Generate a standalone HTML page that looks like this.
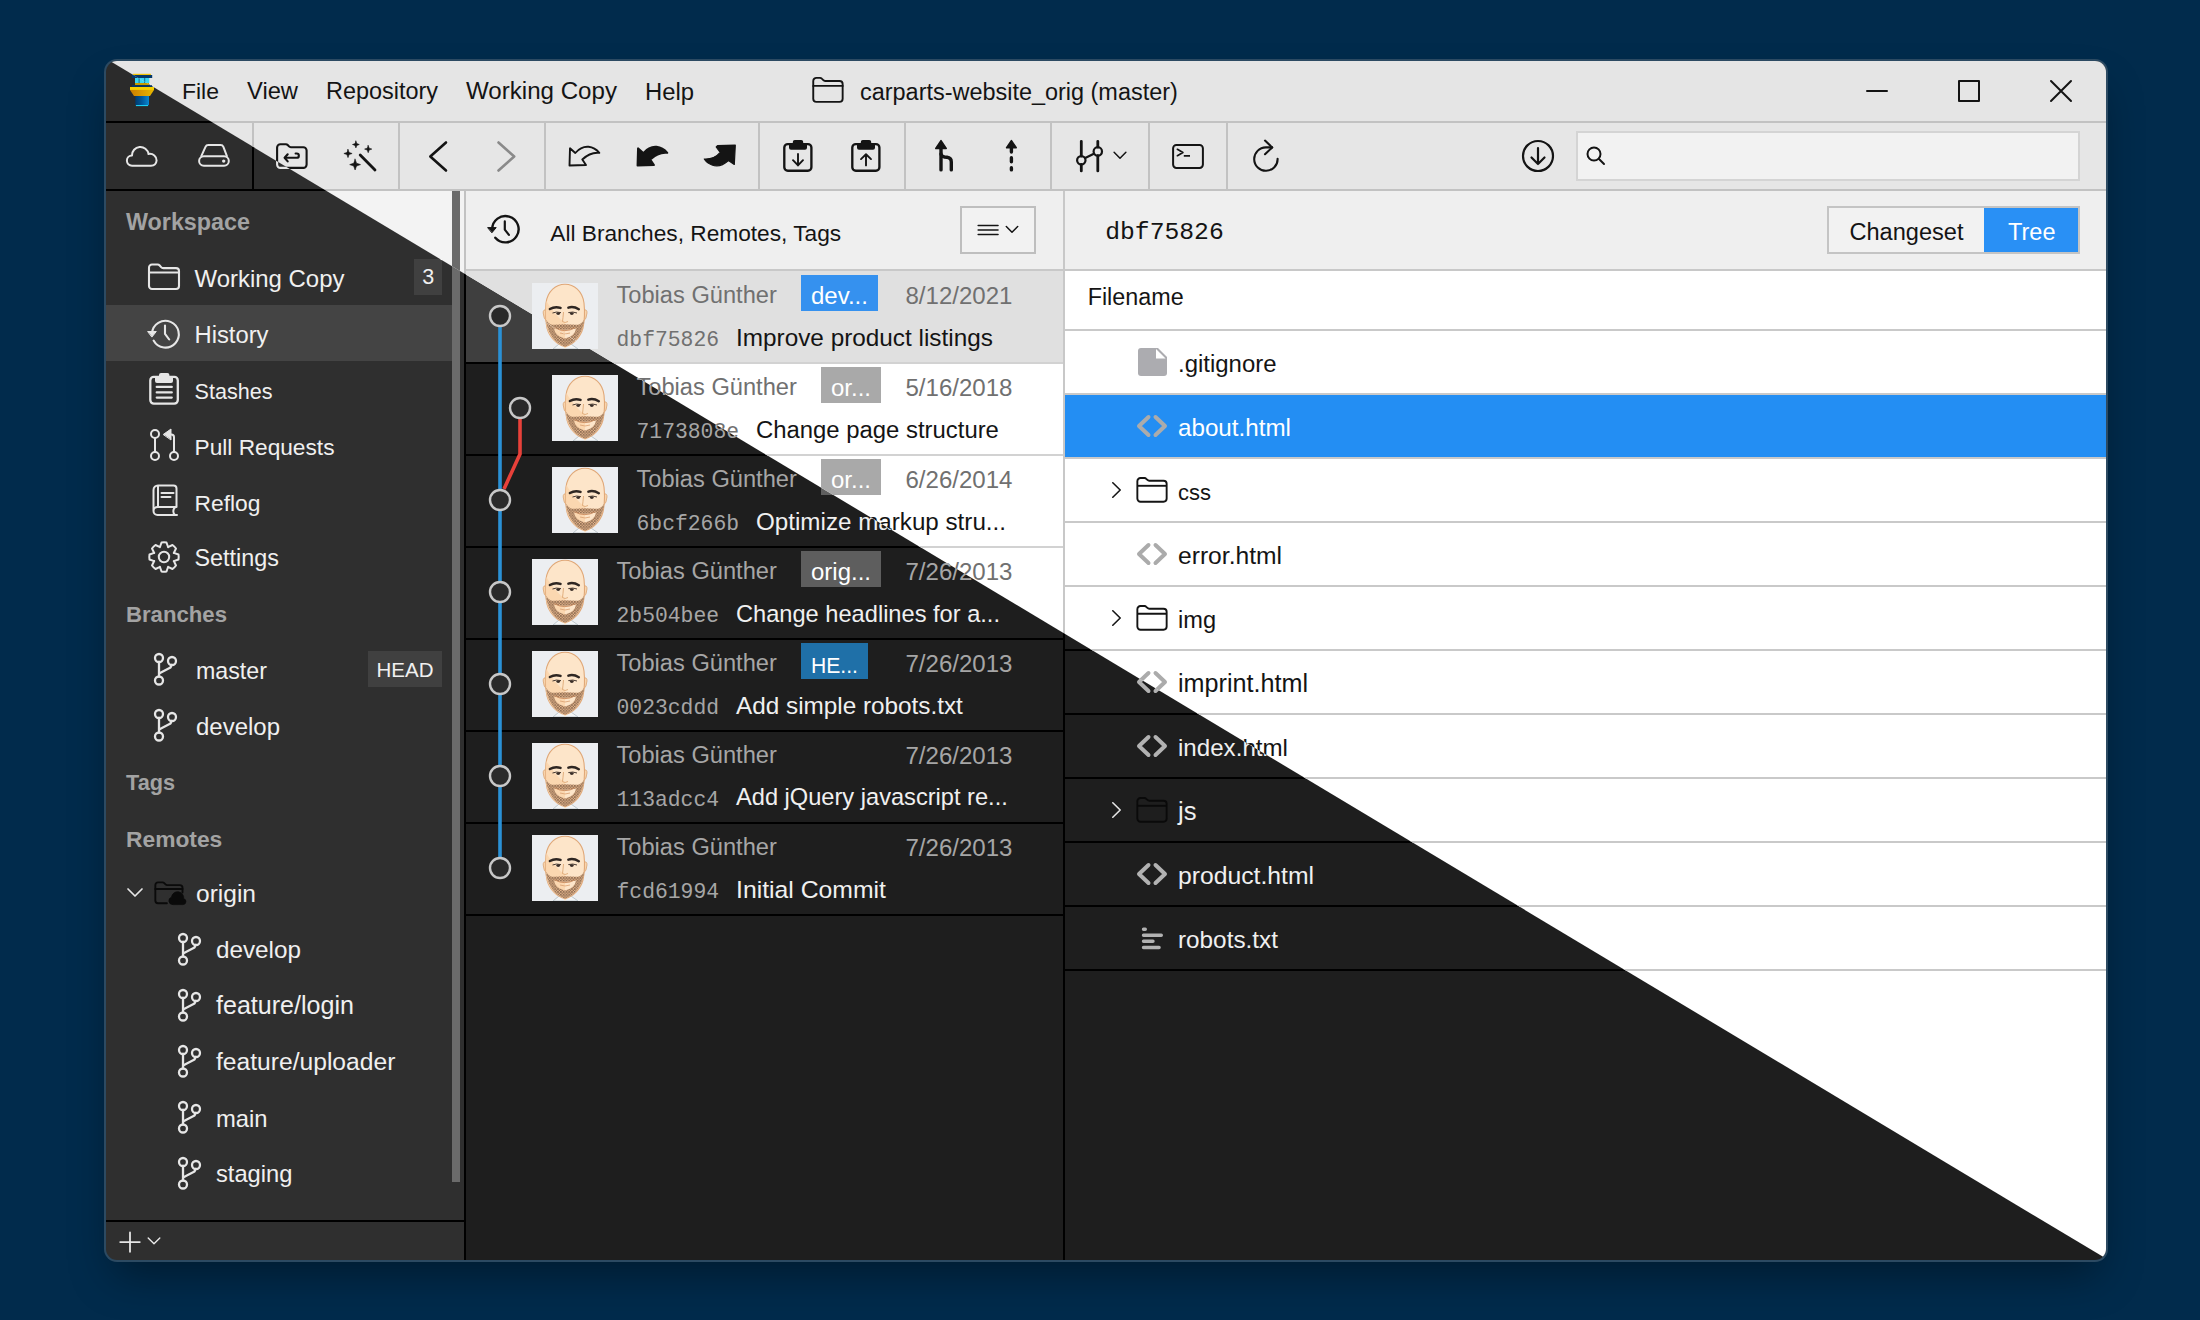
<!DOCTYPE html>
<html><head><meta charset="utf-8"><title>Tower</title><style>
html,body{margin:0;padding:0}
body{width:2200px;height:1320px;background:#012b4c;position:relative;overflow:hidden;font-family:"Liberation Sans",sans-serif}
.frame{position:absolute;left:104px;top:59px;width:2004px;height:1203px;border-radius:13px;background:#2c4a62;box-shadow:0 22px 44px -10px rgba(0,0,0,0.40)}
.win{position:absolute;left:106px;top:61px;width:2000px;height:1199px;border-radius:11px;overflow:hidden}
.layer{position:absolute;left:-106px;top:-61px;width:2200px;height:1320px}
.light{clip-path:polygon(90px 49px, 2122px 1268.2px, 2200px 1268.2px, 2200px 0px, 90px 0px)}
.b{position:absolute}
.ic{position:absolute;overflow:visible}
.t{position:absolute;white-space:pre;line-height:1}
/* light */
.light .titlebar{background:#e5e5e5}
.light .toolbar{background:#e6e6e6}
.light .sep{background:#c2c2c2}
.light .sep2{background:#c8c8c8}
.light .sidebar{background:#f3f3f3}
.light .scroll{background:#6b6b6b}
.light .sel-side{background:#dedede}
.light .badge-side{background:#ffffff}
.light .hhead{background:#efefef}
.light .fhead{background:#ffffff}
.light .list{background:#ffffff}
.light .sel-hist{background:#e0e0e0}
.light .rowsep{background:#d2d2d2}
.light .rowsep2{background:#c9c9c9}
.light .sel-file{background:#238ef3}
.light .search{background:#f2f2f2;box-shadow:inset 0 0 0 2px #d4d4d4}
.light .mbtn{background:#f2f2f2;box-shadow:inset 0 0 0 2px #bebebe}
.light .seg{background:#f2f2f2;box-shadow:inset 0 0 0 2px #c4c4c4}
.light .seg-on{background:#2990f5}
.light .bdg-blue{background:#3591ef}
.light .bdg-blue2{background:#3591ef}
.light .bdg-grey{background:#a9a9a9}
.light .c-main{color:#141414}
.light .c-hdr{color:#8a8a8a}
.light .c-sub{color:#707070}
.light .c-white{color:#ffffff}
.light .c-ico{color:#141414}
.light .c-dim{color:#8a8a8a}
.light .c-fold{color:#141414}
.light .c-fileic{color:#acacb0}
.light .foldtri{fill:#ffffff}
.light .c-codeic{color:#ababab}
.light .gcirc{stroke:#6a6a6a;fill:#ffffff}
/* dark */
.dark .titlebar{background:#2b2b2b}
.dark .toolbar{background:#2d2d2d}
.dark .sep{background:#000000}
.dark .sep2{background:#000000}
.dark .sidebar{background:#2f2f2f}
.dark .scroll{background:#6b6b6b}
.dark .sel-side{background:#444444}
.dark .badge-side{background:#404040}
.dark .hhead{background:#2a2a2a}
.dark .fhead{background:#1e1e1e}
.dark .list{background:#1e1e1e}
.dark .sel-hist{background:#3f3f3f}
.dark .rowsep{background:#000000}
.dark .rowsep2{background:#000000}
.dark .sel-file{background:#1d6fb0}
.dark .search{background:#3a3a3a;box-shadow:inset 0 0 0 2px #555}
.dark .mbtn{box-shadow:inset 0 0 0 2px #555}
.dark .seg{background:#3a3a3a;box-shadow:inset 0 0 0 2px #555}
.dark .seg-on{background:#1d6fb0}
.dark .bdg-blue{background:#1f70a8}
.dark .bdg-blue2{background:#1f70a8}
.dark .bdg-grey{background:#5e5e5e}
.dark .c-main{color:#f0f0f0}
.dark .c-hdr{color:#a3a3a3}
.dark .c-sub{color:#a6a6a6}
.dark .c-white{color:#ffffff}
.dark .c-ico{color:#e6e6e6}
.dark .c-dim{color:#8a8a8a}
.dark .c-fold{color:#0a0a0a}
.dark .c-fileic{color:#9a9a9e}
.dark .foldtri{fill:#1e1e1e}
.dark .c-codeic{color:#b2b2b2}
.dark .gcirc{stroke:#c8c8c8;fill:#2a2a2a}
</style></head>
<body>
<svg width="0" height="0" style="position:absolute"><defs>
<pattern id="stub" width="2.8" height="2.8" patternUnits="userSpaceOnUse"><rect width="2.8" height="2.8" fill="#e9b78c"/><rect x="0.2" y="0.3" width="1.3" height="1.2" fill="#3f2f25"/><rect x="1.6" y="1.6" width="1.1" height="1.1" fill="#6e5442"/></pattern>
<clipPath id="headclip"><path d="M33 1.2C24 1.2 15.5 8 14 20C13.3 27 13.5 38 15 45C17.5 54 25 62 33 63.4C41 62 48.5 54 51 45C52.5 38 52.7 27 52 20C50.5 8 42 1.2 33 1.2Z"/></clipPath>
<symbol id="avatar" viewBox="0 0 66 66">
<rect width="66" height="66" fill="#eceef1"/>
<path d="M21 66 L27 61 L39 61 L46 66Z" fill="#f3f5f6" stroke="#a9b6bd" stroke-width="0.7"/>
<path d="M30 61 L33 66 L37 61Z" fill="#fbe3c6"/>
<path d="M14.6 27 Q11 26 11.2 30 Q11.5 36 15 38.5Z" fill="#f9d5ad" stroke="#dba574" stroke-width="0.8"/>
<path d="M51.6 27 Q55.2 26 55 30 Q54.7 36 51.2 38.5Z" fill="#f9d5ad" stroke="#dba574" stroke-width="0.8"/>
<path d="M33 1.2C24 1.2 15.5 8 14 20C13.3 27 13.5 38 15 45C17.5 54 25 62 33 63.4C41 62 48.5 54 51 45C52.5 38 52.7 27 52 20C50.5 8 42 1.2 33 1.2Z" fill="#fde5c9" stroke="#e0a878" stroke-width="1.1"/>
<g clip-path="url(#headclip)"><path d="M10 10 Q20 30 33 40 L33 66 L10 66Z" fill="#fad3aa" opacity="0.8"/></g>
<path fill-rule="evenodd" d="M14.3 37 Q17 41.5 21 41.8 Q33 40.5 45 41.8 Q49 41.5 52 37 C51.5 48 43 61 33 63.4 C23 61 14.5 48 14.3 37 Z M22 45.5 Q33 48 44 45.5 Q43 53 33 55.5 Q23 53 22 45.5 Z" fill="url(#stub)"/>
<path d="M22.5 44.8 Q33 50.5 43 44.8" stroke="#c98a5c" stroke-width="0.9" fill="none"/>
<path d="M28 50 Q33 52 38 50" stroke="#d9a070" stroke-width="0.8" fill="none"/>
<path d="M17.9 26 Q23 23 28.5 24.9" stroke="#2e2622" stroke-width="2.5" fill="none" stroke-linecap="round"/>
<path d="M36.4 24.6 Q41.5 23 46.8 26.2" stroke="#2e2622" stroke-width="2.5" fill="none" stroke-linecap="round"/>
<path d="M20.5 30 Q24 28.3 29 29.6" stroke="#4a3c34" stroke-width="1" fill="none"/>
<path d="M36.3 29.6 Q41 28.3 45 30" stroke="#4a3c34" stroke-width="1" fill="none"/>
<ellipse cx="26.2" cy="30.6" rx="1.9" ry="1.3" fill="#3a2e28"/>
<ellipse cx="39.8" cy="30.6" rx="1.9" ry="1.3" fill="#3a2e28"/>
<path d="M31.5 29 Q31 35 30.5 38.5 Q33 40.5 36 38.5" stroke="#d9a06a" stroke-width="0.8" fill="none"/>
</symbol></defs></svg>
<div class="frame"></div>
<div class="win">
<div class="layer dark">
<div class="b titlebar" style="left:106px;top:61px;width:2000px;height:60px;"></div>
<div class="b sep" style="left:106px;top:121px;width:2000px;height:2px;"></div>
<svg class="ic" style="left:129px;top:72px" width="27" height="36" viewBox="0 0 27 36">
<defs><linearGradient id="gcol" x1="0" x2="1"><stop offset="0" stop-color="#003a6e"/><stop offset="0.5" stop-color="#005a9e"/><stop offset="1" stop-color="#0a86d0"/></linearGradient>
<linearGradient id="gyel" x1="0" x2="1"><stop offset="0" stop-color="#c97d00"/><stop offset="0.5" stop-color="#db9a00"/><stop offset="1" stop-color="#e8b800"/></linearGradient></defs>
<rect x="4" y="1.8" width="18" height="1.2" fill="#f2c200"/>
<rect x="2.8" y="3" width="20.4" height="3" fill="#05386a"/>
<rect x="6" y="6" width="14.3" height="5" fill="#38d6f5"/>
<rect x="9.6" y="6" width="1" height="5" fill="#1a6a8a"/><rect x="15.2" y="6" width="1" height="5" fill="#1a6a8a"/>
<rect x="6" y="11" width="14" height="2" fill="#c49a00"/>
<rect x="3" y="13.1" width="20" height="1.8" fill="#05386a"/>
<polygon points="1,15 25,15 25,17.9 21,24 5,24 1,17.9" fill="url(#gyel)"/>
<rect x="1" y="15" width="24" height="2.9" fill="#f5cf00"/>
<rect x="6.3" y="24" width="13.7" height="9" fill="url(#gcol)"/>
<rect x="6.9" y="33" width="12.2" height="1.1" fill="#1ad0f5"/>
</svg>
<svg class="ic c-ico" style="left:812px;top:76px" width="34" height="28" viewBox="0 0 34 28" fill="none" stroke="currentColor" stroke-width="1.9" stroke-linecap="round" stroke-linejoin="round" ><path d="M1.25 5a3.15 3.15 0 0 1 3.15-3.15H8a2.5 2.5 0 0 1 1.8.8l1.5 1.5a2.5 2.5 0 0 0 1.8.8H27.5a3.15 3.15 0 0 1 3.15 3.15V22.7a3.15 3.15 0 0 1-3.15 3.15H4.4a3.15 3.15 0 0 1-3.15-3.15Z"/><path d="M1.25 9.9H30.65"/></svg>
<svg class="ic c-ico" style="left:1860px;top:80px" width="34" height="22" viewBox="0 0 34 22" fill="none" stroke="currentColor" stroke-width="2" stroke-linecap="round" stroke-linejoin="round" stroke-linecap="butt"><path d="M7 11h20"/></svg>
<svg class="ic c-ico" style="left:1955px;top:77px" width="28" height="28" viewBox="0 0 28 28" fill="none" stroke="currentColor" stroke-width="2" stroke-linecap="round" stroke-linejoin="round" stroke-linecap="butt" stroke-linejoin="miter"><rect x="4" y="4" width="20" height="20"/></svg>
<svg class="ic c-ico" style="left:2047px;top:77px" width="28" height="28" viewBox="0 0 28 28" fill="none" stroke="currentColor" stroke-width="2" stroke-linecap="round" stroke-linejoin="round" stroke-linecap="butt"><path d="M4 4L24 24M24 4L4 24"/></svg>
<div class="b toolbar" style="left:106px;top:123px;width:2000px;height:66px;"></div>
<div class="b sep" style="left:106px;top:189px;width:2000px;height:2px;"></div>
<div class="b sep" style="left:252px;top:123px;width:2px;height:66px;"></div>
<div class="b sep" style="left:398px;top:123px;width:2px;height:66px;"></div>
<div class="b sep" style="left:544px;top:123px;width:2px;height:66px;"></div>
<div class="b sep" style="left:758px;top:123px;width:2px;height:66px;"></div>
<div class="b sep" style="left:904px;top:123px;width:2px;height:66px;"></div>
<div class="b sep" style="left:1050px;top:123px;width:2px;height:66px;"></div>
<div class="b sep" style="left:1148px;top:123px;width:2px;height:66px;"></div>
<div class="b sep" style="left:1226px;top:123px;width:2px;height:66px;"></div>
<svg class="ic c-ico" style="left:122px;top:140px" width="40" height="32" viewBox="0 0 40 32" fill="none" stroke="currentColor" stroke-width="2" stroke-linecap="round" stroke-linejoin="round" ><path d="M10 25.7A5.1 5.1 0 0 1 10 15.5A8.3 8.3 0 0 1 26.5 14C31 13.2 34.9 16.5 34.6 20.5C34.3 23.7 32 25.7 29 25.7Z"/></svg>
<svg class="ic c-ico" style="left:196px;top:140px" width="36" height="32" viewBox="0 0 36 32" fill="none" stroke="currentColor" stroke-width="2" stroke-linecap="round" stroke-linejoin="round" ><rect x="3.1" y="16.2" width="29.7" height="9.5" rx="4.75"/><path d="M5.3 16.2L9.5 6.8Q10.3 5 12.3 5H24.6Q26.6 5 27.4 6.8L30.9 16.2"/><circle cx="27.7" cy="21.1" r="1.7" fill="currentColor" stroke="none"/></svg>
<svg class="ic c-ico" style="left:274px;top:140px" width="36" height="32" viewBox="0 0 36 32" fill="none" stroke="currentColor" stroke-width="2.1" stroke-linecap="round" stroke-linejoin="round" ><path d="M3.1 24.6V7.5a3.3 3.3 0 0 1 3.3-3.3h5.5a2.5 2.5 0 0 1 1.8.8l1.3 1.4a2.5 2.5 0 0 0 1.8.8H29.3a3.3 3.3 0 0 1 3.3 3.3V24.6a3.3 3.3 0 0 1-3.3 3.3H6.4a3.3 3.3 0 0 1-3.3-3.3z"/><path d="M10.9 17.8H22.7a2.15 2.15 0 0 0 0-4.3H21.6"/><path d="M13.7 14.3L10.6 17.8l3.1 3.6"/></svg>
<svg class="ic c-ico" style="left:341px;top:139px" width="38" height="36" viewBox="0 0 38 36" fill="none" stroke="currentColor" stroke-width="2" stroke-linecap="round" stroke-linejoin="round" ><path d="M14.9 2.1L15.78 4.62L18.3 5.5L15.78 6.38L14.9 8.9L14.02 6.38L11.5 5.5L14.02 4.62Z" fill="currentColor" stroke="currentColor" stroke-width="0.6"/><path d="M27.2 6.5L28.14 9.16L30.8 10.1L28.14 11.04L27.2 13.7L26.26 11.04L23.599999999999998 10.1L26.26 9.16Z" fill="currentColor" stroke="currentColor" stroke-width="0.6"/><path d="M7 10.4L8.07 13.43L11.1 14.5L8.07 15.57L7 18.6L5.93 15.57L2.9000000000000004 14.5L5.93 13.43Z" fill="currentColor" stroke="currentColor" stroke-width="0.6"/><path d="M14.1 20.200000000000003L15.50 24.20L19.5 25.6L15.50 27.00L14.1 31.0L12.70 27.00L8.7 25.6L12.70 24.20Z" fill="currentColor" stroke="currentColor" stroke-width="0.6"/><path d="M19.2 16L34 31.1" stroke-width="2.8"/></svg>
<svg class="ic c-ico" style="left:424px;top:138px" width="28" height="38" viewBox="0 0 28 38" fill="none" stroke="currentColor" stroke-width="2.6" stroke-linecap="round" stroke-linejoin="round" ><path d="M22 4.5L6.3 18.5 22 32.5"/></svg>
<svg class="ic c-dim" style="left:492px;top:138px" width="28" height="38" viewBox="0 0 28 38" fill="none" stroke="currentColor" stroke-width="2.6" stroke-linecap="round" stroke-linejoin="round" ><path d="M6.5 4.5L22.2 18.5 6.5 32.5"/></svg>
<svg class="ic c-ico" style="left:565px;top:141px" width="38" height="30" viewBox="0 0 38 30" fill="none" stroke="currentColor" stroke-width="1.9" stroke-linecap="round" stroke-linejoin="round" ><path d="M5 7.3L4.5 24.5L21 24L17.3 18.5C22 14 27 11 34.3 11.8C29 5.5 19 2 10.3 12Z"/></svg>
<svg class="ic c-ico" style="left:633px;top:141px" width="38" height="30" viewBox="0 0 38 30" fill="none" stroke="currentColor" stroke-width="1.9" stroke-linecap="round" stroke-linejoin="round" ><path d="M5 7.3L4.5 24.5L21 24L17.3 18.5C22 14 27 11 34.3 11.8C29 5.5 19 2 10.3 12Z" fill="currentColor"/></svg>
<svg class="ic c-ico" style="left:700px;top:141px" width="40" height="30" viewBox="0 0 40 30" fill="none" stroke="currentColor" stroke-width="1.2" stroke-linecap="round" stroke-linejoin="round" ><path d="M17.5 4.7L35.3 4.2L34.3 23.5L28.4 19.5C23 24.5 17 26 12 24C8 22.5 5.5 20 4.3 18C9 18.2 16 16.5 20.2 11.3L16.2 6Z" fill="currentColor"/></svg>
<svg class="ic c-ico" style="left:780px;top:137px" width="36" height="38" viewBox="0 0 36 38" fill="none" stroke="currentColor" stroke-width="2.35" stroke-linecap="round" stroke-linejoin="round" ><rect x="4.3" y="7.1" width="27.1" height="26.6" rx="3.5"/><path d="M9 6H27V10.7a2 2 0 0 1-2 2H11a2 2 0 0 1-2-2ZM12.8 6V5a2 2 0 0 1 2-2H21.2a2 2 0 0 1 2 2V6Z" fill="currentColor" stroke="none"/><path d="M18 16.9V28.4M13 23.2L18 28.4 23 23.2" stroke-width="1.9"/></svg>
<svg class="ic c-ico" style="left:848px;top:137px" width="36" height="38" viewBox="0 0 36 38" fill="none" stroke="currentColor" stroke-width="2.35" stroke-linecap="round" stroke-linejoin="round" ><rect x="4.3" y="7.1" width="27.1" height="26.6" rx="3.5"/><path d="M9 6H27V10.7a2 2 0 0 1-2 2H11a2 2 0 0 1-2-2ZM12.8 6V5a2 2 0 0 1 2-2H21.2a2 2 0 0 1 2 2V6Z" fill="currentColor" stroke="none"/><path d="M18 28.4V17.2M13 22.1L18 17.2 23 22.1" stroke-width="1.9"/></svg>
<svg class="ic c-ico" style="left:928px;top:137px" width="30" height="38" viewBox="0 0 30 38" fill="none" stroke="currentColor" stroke-width="3.4" stroke-linecap="round" stroke-linejoin="round" ><path d="M13 12.4V32.9"/><path d="M23.3 32.9V25Q23.3 20.8 19 20.3L16.5 20Q13.5 19.5 13 17"/><path d="M13 3.6L7.8 11.5H18.2Z" fill="currentColor" stroke-width="1.6"/></svg>
<svg class="ic c-ico" style="left:997px;top:137px" width="28" height="38" viewBox="0 0 28 38" fill="none" stroke="currentColor" stroke-width="3.4" stroke-linecap="round" stroke-linejoin="round" ><path d="M14.4 11V15M14.4 20.7V24.8M14.4 30.7V32.9"/><path d="M14.4 3.6L9.6 10.8H19.2Z" fill="currentColor" stroke-width="1.6"/></svg>
<svg class="ic c-ico" style="left:1072px;top:137px" width="36" height="38" viewBox="0 0 36 38" fill="none" stroke="currentColor" stroke-width="2.8" stroke-linecap="round" stroke-linejoin="round" ><path d="M9.3 4.3V19.1M9.3 27.5V33.9M25.8 4.3V10.2M25.8 18.6V33.9"/><circle cx="9.3" cy="23.3" r="4.2" stroke-width="2.2"/><circle cx="25.8" cy="14.4" r="4.2" stroke-width="2.2"/><path d="M13.2 21L21.9 16.7" stroke-width="2.2"/></svg>
<svg class="ic c-ico" style="left:1110px;top:148px" width="20" height="14" viewBox="0 0 20 14" fill="none" stroke="currentColor" stroke-width="1.5" stroke-linecap="round" stroke-linejoin="round" ><path d="M4.1 4.3L10 10.2 15.9 4.3"/></svg>
<svg class="ic c-ico" style="left:1168px;top:139px" width="40" height="34" viewBox="0 0 40 34" fill="none" stroke="currentColor" stroke-width="2" stroke-linecap="round" stroke-linejoin="round" ><rect x="5.1" y="6" width="29.8" height="22.9" rx="3.3"/><path d="M9.4 10.3L14.9 13.5 9.4 16.7" stroke-width="1.7"/><path d="M15.8 16.8H22" stroke-width="1.7" stroke-linecap="butt"/></svg>
<svg class="ic c-ico" style="left:1248px;top:137px" width="36" height="38" viewBox="0 0 36 38" fill="none" stroke="currentColor" stroke-width="2.1" stroke-linecap="round" stroke-linejoin="round" ><path d="M24.2 10.4H17.9A11.7 11.7 0 1 0 29.6 21.8"/><path d="M17 3.6L24.2 10.4 17 17.2"/></svg>
<svg class="ic c-ico" style="left:1519px;top:137px" width="38" height="38" viewBox="0 0 38 38" fill="none" stroke="currentColor" stroke-width="2.2" stroke-linecap="round" stroke-linejoin="round" ><circle cx="19" cy="19" r="15"/><path d="M19 11v16M12.5 20.5L19 27l6.5-6.5"/></svg>
<div class="b search" style="left:1576px;top:131px;width:504px;height:50px;"></div>
<svg class="ic c-ico" style="left:1582px;top:143px" width="28" height="28" viewBox="0 0 28 28" fill="none" stroke="currentColor" stroke-width="2" stroke-linecap="round" stroke-linejoin="round" ><circle cx="12" cy="11" r="6.5"/><path d="M17 16l5 5"/></svg>
<div class="b sidebar" style="left:106px;top:191px;width:346px;height:1030px;"></div>
<div class="b sidebar" style="left:452px;top:191px;width:12px;height:1030px;"></div>
<div class="b scroll" style="left:452px;top:191px;width:8px;height:991px;"></div>
<div class="b sep" style="left:464px;top:191px;width:2px;height:1069px;"></div>
<div class="b sep" style="left:106px;top:1220px;width:358px;height:2px;"></div>
<div class="b sidebar" style="left:106px;top:1222px;width:358px;height:38px;"></div>
<svg class="ic c-ico" style="left:116px;top:1227px" width="30" height="30" viewBox="0 0 30 30" fill="none" stroke="currentColor" stroke-width="1.8" stroke-linecap="round" stroke-linejoin="round" stroke-linecap="butt"><path d="M14 5.5V24.8M4.2 15.1H23.8"/></svg>
<svg class="ic c-ico" style="left:144px;top:1233px" width="20" height="14" viewBox="0 0 20 14" fill="none" stroke="currentColor" stroke-width="1.4" stroke-linecap="round" stroke-linejoin="round" ><path d="M4.2 5L10 10.8 15.8 5"/></svg>
<div class="b sel-side" style="left:106px;top:305px;width:346px;height:56px;"></div>
<div class="b badge-side" style="left:414px;top:259px;width:28px;height:36px;"></div>
<svg class="ic c-ico" style="left:146px;top:261px" width="36" height="32" viewBox="0 0 36 32" fill="none" stroke="currentColor" stroke-width="2.1" stroke-linecap="round" stroke-linejoin="round" ><path d="M3 6.5a3 3 0 0 1 3-3h5.5a3 3 0 0 1 2.2 1l1.4 1.6a3 3 0 0 0 2.2 1H30a3 3 0 0 1 3 3V25a3 3 0 0 1-3 3H6a3 3 0 0 1-3-3z"/><path d="M3 11.5h30"/></svg>
<svg class="ic c-ico" style="left:146px;top:317px" width="36" height="34" viewBox="0 0 36 34" fill="none" stroke="currentColor" stroke-width="2.1" stroke-linecap="round" stroke-linejoin="round" ><path d="M6 16.4A13.4 13.4 0 1 1 7.6 23.6"/><path d="M19 8.5V16.8L23.2 22.5"/><path d="M2 14.5H10.3L6.1 19.8Z" fill="currentColor" stroke-width="1"/></svg>
<svg class="ic c-ico" style="left:146px;top:370px" width="36" height="38" viewBox="0 0 36 38" fill="none" stroke="currentColor" stroke-width="2.3" stroke-linecap="round" stroke-linejoin="round" ><rect x="4.3" y="6.9" width="27.5" height="26.7" rx="3.5"/><path d="M9 7.7H27V10.9a2 2 0 0 1-2 2H11a2 2 0 0 1-2-2ZM13 7.7V5a2 2 0 0 1 2-2H21.4a2 2 0 0 1 2 2V7.7Z" fill="currentColor" stroke="none"/><path d="M10.7 16.9H25.8M10.7 22.4H25.8M10.7 27.6H25.8" stroke-width="2.2"/></svg>
<svg class="ic c-ico" style="left:146px;top:426px" width="36" height="38" viewBox="0 0 36 38" fill="none" stroke="currentColor" stroke-width="2" stroke-linecap="round" stroke-linejoin="round" ><circle cx="9" cy="8" r="4"/><circle cx="9" cy="30" r="4"/><circle cx="28" cy="30" r="4"/><path d="M9 12v14"/><path d="M28 25.6V11.2a2.7 2.7 0 0 0-2.7-2.7H22"/><path d="M17.5 8.3L25 3V13.6Z" fill="currentColor" stroke-width="1"/></svg>
<svg class="ic c-ico" style="left:146px;top:482px" width="36" height="38" viewBox="0 0 36 38" fill="none" stroke="currentColor" stroke-width="2" stroke-linecap="round" stroke-linejoin="round" ><path d="M7.5 29V8a4.5 4.5 0 0 1 4.5-4.5h15.5a3 3 0 0 1 3 3V25H11.5a4 4 0 0 0 0 8H31"/><path d="M12 4v21"/><path d="M15.5 11h12M15.5 15h9"/><path d="M29 25.5a5 5 0 0 0 0 7.5"/></svg>
<svg class="ic c-ico" style="left:146px;top:539px" width="36" height="36" viewBox="0 0 36 36" fill="none" stroke="currentColor" stroke-width="2" stroke-linecap="round" stroke-linejoin="round" ><path d="M13.87 8.24L15.51 3.51A14.7 14.7 0 0 1 20.49 3.51L22.13 8.24A10.6 10.6 0 0 1 21.98 8.18L26.49 6.00A14.7 14.7 0 0 1 30.00 9.51L27.82 14.02A10.6 10.6 0 0 1 27.76 13.87L32.49 15.51A14.7 14.7 0 0 1 32.49 20.49L27.76 22.13A10.6 10.6 0 0 1 27.82 21.98L30.00 26.49A14.7 14.7 0 0 1 26.49 30.00L21.98 27.82A10.6 10.6 0 0 1 22.13 27.76L20.49 32.49A14.7 14.7 0 0 1 15.51 32.49L13.87 27.76A10.6 10.6 0 0 1 14.02 27.82L9.51 30.00A14.7 14.7 0 0 1 6.00 26.49L8.18 21.98A10.6 10.6 0 0 1 8.24 22.13L3.51 20.49A14.7 14.7 0 0 1 3.51 15.51L8.24 13.87A10.6 10.6 0 0 1 8.18 14.02L6.00 9.51A14.7 14.7 0 0 1 9.51 6.00L14.02 8.18A10.6 10.6 0 0 1 13.87 8.24Z"/><circle cx="18" cy="18" r="5.2"/></svg>
<svg class="ic c-ico" style="left:153px;top:651px" width="26" height="38" viewBox="0 0 26 38" fill="none" stroke="currentColor" stroke-width="2.3" stroke-linecap="round" stroke-linejoin="round" ><circle cx="6" cy="7" r="4"/><circle cx="19" cy="10" r="4"/><circle cx="6" cy="29.5" r="4"/><path d="M6 11v14.5"/><path d="M7 22l10.5-5.5 1-2.5"/></svg>
<div class="b badge-side" style="left:368px;top:651px;width:74px;height:36px;"></div>
<svg class="ic c-ico" style="left:153px;top:707px" width="26" height="38" viewBox="0 0 26 38" fill="none" stroke="currentColor" stroke-width="2.3" stroke-linecap="round" stroke-linejoin="round" ><circle cx="6" cy="7" r="4"/><circle cx="19" cy="10" r="4"/><circle cx="6" cy="29.5" r="4"/><path d="M6 11v14.5"/><path d="M7 22l10.5-5.5 1-2.5"/></svg>
<svg class="ic c-ico" style="left:124px;top:882px" width="22" height="22" viewBox="0 0 22 22" fill="none" stroke="currentColor" stroke-width="1.7" stroke-linecap="round" stroke-linejoin="round" ><path d="M4 7l7 7 7-7"/></svg>
<svg class="ic c-fold" style="left:152px;top:878px" width="36" height="34" viewBox="0 0 36 34" fill="none" stroke="currentColor" stroke-width="1.9" stroke-linecap="round" stroke-linejoin="round" ><path d="M14.9 25.2H6a2.65 2.65 0 0 1-2.65-2.65V7A2.65 2.65 0 0 1 6 4.35H10.5a2.5 2.5 0 0 1 1.8.8l1.2 1.2a2.5 2.5 0 0 0 1.8.8H27.9a2.6 2.6 0 0 1 2.6 2.6V14.5"/><path d="M3.35 11H30.5"/><path d="M20.6 26.6A3.8 3.8 0 0 1 19.5 19.2A5.2 5.2 0 0 1 31.7 20.7A3 3 0 0 1 31 26.6Z" fill="currentColor" stroke-width="0.8"/></svg>
<svg class="ic c-ico" style="left:177px;top:931px" width="26" height="38" viewBox="0 0 26 38" fill="none" stroke="currentColor" stroke-width="2.3" stroke-linecap="round" stroke-linejoin="round" ><circle cx="6" cy="7" r="4"/><circle cx="19" cy="10" r="4"/><circle cx="6" cy="29.5" r="4"/><path d="M6 11v14.5"/><path d="M7 22l10.5-5.5 1-2.5"/></svg>
<svg class="ic c-ico" style="left:177px;top:987px" width="26" height="38" viewBox="0 0 26 38" fill="none" stroke="currentColor" stroke-width="2.3" stroke-linecap="round" stroke-linejoin="round" ><circle cx="6" cy="7" r="4"/><circle cx="19" cy="10" r="4"/><circle cx="6" cy="29.5" r="4"/><path d="M6 11v14.5"/><path d="M7 22l10.5-5.5 1-2.5"/></svg>
<svg class="ic c-ico" style="left:177px;top:1043px" width="26" height="38" viewBox="0 0 26 38" fill="none" stroke="currentColor" stroke-width="2.3" stroke-linecap="round" stroke-linejoin="round" ><circle cx="6" cy="7" r="4"/><circle cx="19" cy="10" r="4"/><circle cx="6" cy="29.5" r="4"/><path d="M6 11v14.5"/><path d="M7 22l10.5-5.5 1-2.5"/></svg>
<svg class="ic c-ico" style="left:177px;top:1099px" width="26" height="38" viewBox="0 0 26 38" fill="none" stroke="currentColor" stroke-width="2.3" stroke-linecap="round" stroke-linejoin="round" ><circle cx="6" cy="7" r="4"/><circle cx="19" cy="10" r="4"/><circle cx="6" cy="29.5" r="4"/><path d="M6 11v14.5"/><path d="M7 22l10.5-5.5 1-2.5"/></svg>
<svg class="ic c-ico" style="left:177px;top:1155px" width="26" height="38" viewBox="0 0 26 38" fill="none" stroke="currentColor" stroke-width="2.3" stroke-linecap="round" stroke-linejoin="round" ><circle cx="6" cy="7" r="4"/><circle cx="19" cy="10" r="4"/><circle cx="6" cy="29.5" r="4"/><path d="M6 11v14.5"/><path d="M7 22l10.5-5.5 1-2.5"/></svg>
<div class="b hhead" style="left:466px;top:191px;width:597px;height:78px;"></div>
<div class="b sep2" style="left:466px;top:269px;width:597px;height:2px;"></div>
<div class="b list" style="left:466px;top:271px;width:597px;height:989px;"></div>
<svg class="ic c-ico" style="left:486px;top:212px" width="36" height="36" viewBox="0 0 36 36" fill="none" stroke="currentColor" stroke-width="2.4" stroke-linecap="round" stroke-linejoin="round" ><path d="M6.2 17.2A13.2 13.2 0 1 1 9.3 25.7"/><path d="M18.8 9.4V17.6L22.9 22.9" stroke-width="2.2"/><path d="M2 15.6H10.2L6.1 20.5Z" fill="currentColor" stroke-width="1"/></svg>
<div class="b mbtn" style="left:960px;top:206px;width:76px;height:48px;"></div>
<svg class="ic c-ico" style="left:974px;top:219px" width="30" height="22" viewBox="0 0 30 22" fill="none" stroke="currentColor" stroke-width="1.6" stroke-linecap="round" stroke-linejoin="round" ><path d="M4.2 6.5H24M4.2 11H24M4.2 15.5H24"/></svg>
<svg class="ic c-ico" style="left:1000px;top:222px" width="22" height="14" viewBox="0 0 22 14" fill="none" stroke="currentColor" stroke-width="1.5" stroke-linecap="round" stroke-linejoin="round" ><path d="M6.3 4.5L12 10.2 17.7 4.5"/></svg>
<div class="b sel-hist" style="left:466px;top:271px;width:597px;height:91px;"></div>
<div class="b rowsep" style="left:466px;top:362px;width:597px;height:2px;"></div>
<svg class="ic" style="left:532px;top:283px" width="66" height="66"><use href="#avatar"/></svg>
<div class="b bdg-blue" style="left:801px;top:275px;width:77px;height:36px;"></div>
<div class="b rowsep" style="left:466px;top:454px;width:597px;height:2px;"></div>
<svg class="ic" style="left:552px;top:375px" width="66" height="66"><use href="#avatar"/></svg>
<div class="b bdg-grey" style="left:821px;top:367px;width:60px;height:36px;"></div>
<div class="b rowsep" style="left:466px;top:546px;width:597px;height:2px;"></div>
<svg class="ic" style="left:552px;top:467px" width="66" height="66"><use href="#avatar"/></svg>
<div class="b bdg-grey" style="left:821px;top:459px;width:60px;height:36px;"></div>
<div class="b rowsep" style="left:466px;top:638px;width:597px;height:2px;"></div>
<svg class="ic" style="left:532px;top:559px" width="66" height="66"><use href="#avatar"/></svg>
<div class="b bdg-grey" style="left:801px;top:551px;width:80px;height:36px;"></div>
<div class="b rowsep" style="left:466px;top:730px;width:597px;height:2px;"></div>
<svg class="ic" style="left:532px;top:651px" width="66" height="66"><use href="#avatar"/></svg>
<div class="b bdg-blue2" style="left:801px;top:643px;width:67px;height:36px;"></div>
<div class="b rowsep" style="left:466px;top:822px;width:597px;height:2px;"></div>
<svg class="ic" style="left:532px;top:743px" width="66" height="66"><use href="#avatar"/></svg>
<div class="b rowsep" style="left:466px;top:914px;width:597px;height:2px;"></div>
<svg class="ic" style="left:532px;top:835px" width="66" height="66"><use href="#avatar"/></svg>
<svg class="ic" style="left:466px;top:270px" width="100" height="650" viewBox="0 0 100 650">
<path d="M34 46V598" stroke="#2a91d6" stroke-width="3.6"/>
<path d="M54 148V184L38 219" stroke="#e8413a" stroke-width="3.6" fill="none"/>
<g class="gcirc" stroke-width="2.4">
<circle cx="34" cy="46" r="10"/><circle cx="54" cy="138" r="10"/><circle cx="34" cy="230" r="10"/><circle cx="34" cy="322" r="10"/><circle cx="34" cy="414" r="10"/><circle cx="34" cy="506" r="10"/><circle cx="34" cy="598" r="10"/>
</g></svg>
<div class="b sep2" style="left:1063px;top:191px;width:2px;height:1069px;"></div>
<div class="b hhead" style="left:1065px;top:191px;width:1041px;height:78px;"></div>
<div class="b sep2" style="left:1065px;top:269px;width:1041px;height:2px;"></div>
<div class="b seg" style="left:1827px;top:206px;width:253px;height:48px;"></div>
<div class="b seg-on" style="left:1984px;top:208px;width:94px;height:44px;"></div>
<div class="b fhead" style="left:1065px;top:271px;width:1041px;height:58px;"></div>
<div class="b rowsep2" style="left:1065px;top:329px;width:1041px;height:2px;"></div>
<div class="b list" style="left:1065px;top:331px;width:1041px;height:929px;"></div>
<div class="b rowsep2" style="left:1065px;top:393px;width:1041px;height:2px;"></div>
<svg class="ic c-fileic" style="left:1136px;top:345px" width="34" height="34" viewBox="0 0 34 34" fill="none" stroke="currentColor" stroke-width="0" stroke-linecap="round" stroke-linejoin="round" ><path d="M2 6a3 3 0 0 1 3-3h17l9 9v16a3 3 0 0 1-3 3H5a3 3 0 0 1-3-3z" fill="currentColor" stroke="none"/><path d="M20 4v9.6h9.6z" class="foldtri" stroke="none"/></svg>
<div class="b sel-file" style="left:1065px;top:395px;width:1041px;height:64px;"></div>
<div class="b rowsep2" style="left:1065px;top:457px;width:1041px;height:2px;"></div>
<svg class="ic c-codeic" style="left:1135px;top:412px" width="34" height="30" viewBox="0 0 34 30" fill="none" stroke="currentColor" stroke-width="4" stroke-linecap="round" stroke-linejoin="round" ><path d="M13.5 5L4 14l9.5 9M20.5 5L30 14l-9.5 9"/></svg>
<div class="b rowsep2" style="left:1065px;top:521px;width:1041px;height:2px;"></div>
<svg class="ic c-ico" style="left:1109px;top:480px" width="16" height="22" viewBox="0 0 16 22" fill="none" stroke="currentColor" stroke-width="1.6" stroke-linecap="round" stroke-linejoin="round" ><path d="M3.8 2.8L11.2 10 3.8 17.2"/></svg>
<svg class="ic c-fold" style="left:1133px;top:474px" width="38" height="34" viewBox="0 0 38 34" fill="none" stroke="currentColor" stroke-width="1.9" stroke-linecap="round" stroke-linejoin="round" ><path d="M4.35 7.2A3.15 3.15 0 0 1 7.5 4.05H11.5a2.5 2.5 0 0 1 1.8.8l1.1 1.1a2.5 2.5 0 0 0 1.8.75H30.5a3.15 3.15 0 0 1 3.15 3.15V24.6a3.15 3.15 0 0 1-3.15 3.15H7.5a3.15 3.15 0 0 1-3.15-3.15Z"/><path d="M4.35 11.8H33.65" stroke-linecap="butt"/></svg>
<div class="b rowsep2" style="left:1065px;top:585px;width:1041px;height:2px;"></div>
<svg class="ic c-codeic" style="left:1135px;top:540px" width="34" height="30" viewBox="0 0 34 30" fill="none" stroke="currentColor" stroke-width="4" stroke-linecap="round" stroke-linejoin="round" ><path d="M13.5 5L4 14l9.5 9M20.5 5L30 14l-9.5 9"/></svg>
<div class="b rowsep2" style="left:1065px;top:649px;width:1041px;height:2px;"></div>
<svg class="ic c-ico" style="left:1109px;top:608px" width="16" height="22" viewBox="0 0 16 22" fill="none" stroke="currentColor" stroke-width="1.6" stroke-linecap="round" stroke-linejoin="round" ><path d="M3.8 2.8L11.2 10 3.8 17.2"/></svg>
<svg class="ic c-fold" style="left:1133px;top:602px" width="38" height="34" viewBox="0 0 38 34" fill="none" stroke="currentColor" stroke-width="1.9" stroke-linecap="round" stroke-linejoin="round" ><path d="M4.35 7.2A3.15 3.15 0 0 1 7.5 4.05H11.5a2.5 2.5 0 0 1 1.8.8l1.1 1.1a2.5 2.5 0 0 0 1.8.75H30.5a3.15 3.15 0 0 1 3.15 3.15V24.6a3.15 3.15 0 0 1-3.15 3.15H7.5a3.15 3.15 0 0 1-3.15-3.15Z"/><path d="M4.35 11.8H33.65" stroke-linecap="butt"/></svg>
<div class="b rowsep2" style="left:1065px;top:713px;width:1041px;height:2px;"></div>
<svg class="ic c-codeic" style="left:1135px;top:668px" width="34" height="30" viewBox="0 0 34 30" fill="none" stroke="currentColor" stroke-width="4" stroke-linecap="round" stroke-linejoin="round" ><path d="M13.5 5L4 14l9.5 9M20.5 5L30 14l-9.5 9"/></svg>
<div class="b rowsep2" style="left:1065px;top:777px;width:1041px;height:2px;"></div>
<svg class="ic c-codeic" style="left:1135px;top:732px" width="34" height="30" viewBox="0 0 34 30" fill="none" stroke="currentColor" stroke-width="4" stroke-linecap="round" stroke-linejoin="round" ><path d="M13.5 5L4 14l9.5 9M20.5 5L30 14l-9.5 9"/></svg>
<div class="b rowsep2" style="left:1065px;top:841px;width:1041px;height:2px;"></div>
<svg class="ic c-ico" style="left:1109px;top:800px" width="16" height="22" viewBox="0 0 16 22" fill="none" stroke="currentColor" stroke-width="1.6" stroke-linecap="round" stroke-linejoin="round" ><path d="M3.8 2.8L11.2 10 3.8 17.2"/></svg>
<svg class="ic c-fold" style="left:1133px;top:794px" width="38" height="34" viewBox="0 0 38 34" fill="none" stroke="currentColor" stroke-width="1.9" stroke-linecap="round" stroke-linejoin="round" ><path d="M4.35 7.2A3.15 3.15 0 0 1 7.5 4.05H11.5a2.5 2.5 0 0 1 1.8.8l1.1 1.1a2.5 2.5 0 0 0 1.8.75H30.5a3.15 3.15 0 0 1 3.15 3.15V24.6a3.15 3.15 0 0 1-3.15 3.15H7.5a3.15 3.15 0 0 1-3.15-3.15Z"/><path d="M4.35 11.8H33.65" stroke-linecap="butt"/></svg>
<div class="b rowsep2" style="left:1065px;top:905px;width:1041px;height:2px;"></div>
<svg class="ic c-codeic" style="left:1135px;top:860px" width="34" height="30" viewBox="0 0 34 30" fill="none" stroke="currentColor" stroke-width="4" stroke-linecap="round" stroke-linejoin="round" ><path d="M13.5 5L4 14l9.5 9M20.5 5L30 14l-9.5 9"/></svg>
<div class="b rowsep2" style="left:1065px;top:969px;width:1041px;height:2px;"></div>
<svg class="ic c-codeic" style="left:1136px;top:921px" width="34" height="34" viewBox="0 0 34 34" fill="none" stroke="currentColor" stroke-width="3.4" stroke-linecap="round" stroke-linejoin="round" ><path d="M7.5 8.3H9.3M7.5 14.3H25.3M7.5 20.3H17M7.5 26.5H23.1"/></svg>
<div class="t c-main" style="left:182.00px;top:80.26px;font-size:22.96px;font-family:'Liberation Sans';font-weight:400">File</div>
<div class="t c-main" style="left:247.00px;top:79.62px;font-size:23.73px;font-family:'Liberation Sans';font-weight:400">View</div>
<div class="t c-main" style="left:326.00px;top:79.87px;font-size:23.43px;font-family:'Liberation Sans';font-weight:400">Repository</div>
<div class="t c-main" style="left:466.00px;top:79.29px;font-size:24.11px;font-family:'Liberation Sans';font-weight:400">Working Copy</div>
<div class="t c-main" style="left:645.00px;top:79.53px;font-size:23.82px;font-family:'Liberation Sans';font-weight:400">Help</div>
<div class="t c-main" style="left:860.00px;top:80.65px;font-size:23.45px;font-family:'Liberation Sans';font-weight:400">carparts-website_orig (master)</div>
<div class="t c-hdr" style="left:126.00px;top:210.76px;font-size:23.32px;font-family:'Liberation Sans';font-weight:700">Workspace</div>
<div class="t c-main" style="left:422.20px;top:267.40px;font-size:21.50px;font-family:'Liberation Sans';font-weight:400">3</div>
<div class="t c-main" style="left:194.50px;top:266.92px;font-size:23.96px;font-family:'Liberation Sans';font-weight:400">Working Copy</div>
<div class="t c-main" style="left:194.50px;top:323.07px;font-size:23.78px;font-family:'Liberation Sans';font-weight:400">History</div>
<div class="t c-main" style="left:194.50px;top:380.93px;font-size:21.59px;font-family:'Liberation Sans';font-weight:400">Stashes</div>
<div class="t c-main" style="left:194.50px;top:435.99px;font-size:22.69px;font-family:'Liberation Sans';font-weight:400">Pull Requests</div>
<div class="t c-main" style="left:194.50px;top:491.87px;font-size:22.83px;font-family:'Liberation Sans';font-weight:400">Reflog</div>
<div class="t c-main" style="left:194.50px;top:547.40px;font-size:23.39px;font-family:'Liberation Sans';font-weight:400">Settings</div>
<div class="t c-hdr" style="left:126.00px;top:603.84px;font-size:22.16px;font-family:'Liberation Sans';font-weight:700">Branches</div>
<div class="t c-main" style="left:196.00px;top:660.33px;font-size:23.23px;font-family:'Liberation Sans';font-weight:400">master</div>
<div class="t c-main" style="left:376.50px;top:659.63px;font-size:20.52px;font-family:'Liberation Sans';font-weight:400">HEAD</div>
<div class="t c-main" style="left:196.00px;top:714.70px;font-size:23.98px;font-family:'Liberation Sans';font-weight:400">develop</div>
<div class="t c-hdr" style="left:126.00px;top:772.15px;font-size:21.68px;font-family:'Liberation Sans';font-weight:700">Tags</div>
<div class="t c-hdr" style="left:126.00px;top:827.70px;font-size:22.80px;font-family:'Liberation Sans';font-weight:700">Remotes</div>
<div class="t c-main" style="left:196.00px;top:881.73px;font-size:24.53px;font-family:'Liberation Sans';font-weight:400">origin</div>
<div class="t c-main" style="left:216.00px;top:938.16px;font-size:24.27px;font-family:'Liberation Sans';font-weight:400">develop</div>
<div class="t c-main" style="left:216.00px;top:993.48px;font-size:25.07px;font-family:'Liberation Sans';font-weight:400">feature/login</div>
<div class="t c-main" style="left:216.00px;top:1049.85px;font-size:24.63px;font-family:'Liberation Sans';font-weight:400">feature/uploader</div>
<div class="t c-main" style="left:216.00px;top:1106.55px;font-size:23.81px;font-family:'Liberation Sans';font-weight:400">main</div>
<div class="t c-main" style="left:216.00px;top:1162.64px;font-size:23.69px;font-family:'Liberation Sans';font-weight:400">staging</div>
<div class="t c-main" style="left:550.30px;top:221.79px;font-size:22.70px;font-family:'Liberation Sans';font-weight:400">All Branches, Remotes, Tags</div>
<div class="t c-sub" style="left:616.50px;top:284.48px;font-size:23.65px;font-family:'Liberation Sans';font-weight:400">Tobias Günther</div>
<div class="t c-white" style="left:811.00px;top:284.16px;font-size:24.03px;font-family:'Liberation Sans';font-weight:400">dev...</div>
<div class="t c-sub" style="left:905.50px;top:284.14px;font-size:24.05px;font-family:'Liberation Sans';font-weight:400">8/12/2021</div>
<div class="t c-sub" style="left:616.50px;top:330.12px;font-size:21.37px;font-family:'Liberation Mono';font-weight:400">dbf75826</div>
<div class="t c-main" style="left:736.00px;top:325.90px;font-size:24.34px;font-family:'Liberation Sans';font-weight:400">Improve product listings</div>
<div class="t c-sub" style="left:636.50px;top:376.48px;font-size:23.65px;font-family:'Liberation Sans';font-weight:400">Tobias Günther</div>
<div class="t c-white" style="left:831.00px;top:376.19px;font-size:23.99px;font-family:'Liberation Sans';font-weight:400">or...</div>
<div class="t c-sub" style="left:905.50px;top:376.14px;font-size:24.05px;font-family:'Liberation Sans';font-weight:400">5/16/2018</div>
<div class="t c-sub" style="left:636.50px;top:422.12px;font-size:21.37px;font-family:'Liberation Mono';font-weight:400">7173808e</div>
<div class="t c-main" style="left:756.00px;top:418.28px;font-size:23.89px;font-family:'Liberation Sans';font-weight:400">Change page structure</div>
<div class="t c-sub" style="left:636.50px;top:468.48px;font-size:23.65px;font-family:'Liberation Sans';font-weight:400">Tobias Günther</div>
<div class="t c-white" style="left:831.00px;top:468.19px;font-size:23.99px;font-family:'Liberation Sans';font-weight:400">or...</div>
<div class="t c-sub" style="left:905.50px;top:468.14px;font-size:24.05px;font-family:'Liberation Sans';font-weight:400">6/26/2014</div>
<div class="t c-sub" style="left:636.50px;top:514.12px;font-size:21.37px;font-family:'Liberation Mono';font-weight:400">6bcf266b</div>
<div class="t c-main" style="left:756.00px;top:510.03px;font-size:24.19px;font-family:'Liberation Sans';font-weight:400">Optimize markup stru...</div>
<div class="t c-sub" style="left:616.50px;top:560.48px;font-size:23.65px;font-family:'Liberation Sans';font-weight:400">Tobias Günther</div>
<div class="t c-white" style="left:811.00px;top:560.19px;font-size:23.99px;font-family:'Liberation Sans';font-weight:400">orig...</div>
<div class="t c-sub" style="left:905.50px;top:560.14px;font-size:24.05px;font-family:'Liberation Sans';font-weight:400">7/26/2013</div>
<div class="t c-sub" style="left:616.50px;top:606.12px;font-size:21.37px;font-family:'Liberation Mono';font-weight:400">2b504bee</div>
<div class="t c-main" style="left:736.00px;top:602.50px;font-size:23.63px;font-family:'Liberation Sans';font-weight:400">Change headlines for a...</div>
<div class="t c-sub" style="left:616.50px;top:652.48px;font-size:23.65px;font-family:'Liberation Sans';font-weight:400">Tobias Günther</div>
<div class="t c-white" style="left:811.00px;top:654.60px;font-size:21.15px;font-family:'Liberation Sans';font-weight:400">HE...</div>
<div class="t c-sub" style="left:905.50px;top:652.14px;font-size:24.05px;font-family:'Liberation Sans';font-weight:400">7/26/2013</div>
<div class="t c-sub" style="left:616.50px;top:698.12px;font-size:21.37px;font-family:'Liberation Mono';font-weight:400">0023cddd</div>
<div class="t c-main" style="left:736.00px;top:693.92px;font-size:24.31px;font-family:'Liberation Sans';font-weight:400">Add simple robots.txt</div>
<div class="t c-sub" style="left:616.50px;top:744.48px;font-size:23.65px;font-family:'Liberation Sans';font-weight:400">Tobias Günther</div>
<div class="t c-sub" style="left:905.50px;top:744.14px;font-size:24.05px;font-family:'Liberation Sans';font-weight:400">7/26/2013</div>
<div class="t c-sub" style="left:616.50px;top:790.12px;font-size:21.37px;font-family:'Liberation Mono';font-weight:400">113adcc4</div>
<div class="t c-main" style="left:736.00px;top:786.49px;font-size:23.64px;font-family:'Liberation Sans';font-weight:400">Add jQuery javascript re...</div>
<div class="t c-sub" style="left:616.50px;top:836.48px;font-size:23.65px;font-family:'Liberation Sans';font-weight:400">Tobias Günther</div>
<div class="t c-sub" style="left:905.50px;top:836.14px;font-size:24.05px;font-family:'Liberation Sans';font-weight:400">7/26/2013</div>
<div class="t c-sub" style="left:616.50px;top:882.12px;font-size:21.37px;font-family:'Liberation Mono';font-weight:400">fcd61994</div>
<div class="t c-main" style="left:736.00px;top:877.54px;font-size:24.77px;font-family:'Liberation Sans';font-weight:400">Initial Commit</div>
<div class="t c-main" style="left:1105.20px;top:219.66px;font-size:24.70px;font-family:'Liberation Mono';font-weight:400">dbf75826</div>
<div class="t c-main" style="left:1849.50px;top:221.35px;font-size:23.57px;font-family:'Liberation Sans';font-weight:400">Changeset</div>
<div class="t c-white" style="left:2008.00px;top:221.39px;font-size:23.53px;font-family:'Liberation Sans';font-weight:400">Tree</div>
<div class="t c-main" style="left:1087.70px;top:286.44px;font-size:23.34px;font-family:'Liberation Sans';font-weight:400">Filename</div>
<div class="t c-main" style="left:1178.00px;top:352.43px;font-size:23.94px;font-family:'Liberation Sans';font-weight:400">.gitignore</div>
<div class="t c-white" style="left:1178.00px;top:416.22px;font-size:24.20px;font-family:'Liberation Sans';font-weight:400">about.html</div>
<div class="t c-main" style="left:1178.00px;top:482.08px;font-size:22.00px;font-family:'Liberation Sans';font-weight:400">css</div>
<div class="t c-main" style="left:1178.00px;top:543.85px;font-size:24.63px;font-family:'Liberation Sans';font-weight:400">error.html</div>
<div class="t c-main" style="left:1178.00px;top:608.74px;font-size:23.58px;font-family:'Liberation Sans';font-weight:400">img</div>
<div class="t c-main" style="left:1178.00px;top:671.40px;font-size:25.16px;font-family:'Liberation Sans';font-weight:400">imprint.html</div>
<div class="t c-main" style="left:1178.00px;top:736.27px;font-size:24.14px;font-family:'Liberation Sans';font-weight:400">index.html</div>
<div class="t c-main" style="left:1178.00px;top:799.02px;font-size:25.62px;font-family:'Liberation Sans';font-weight:400">js</div>
<div class="t c-main" style="left:1178.00px;top:863.78px;font-size:24.72px;font-family:'Liberation Sans';font-weight:400">product.html</div>
<div class="t c-main" style="left:1178.00px;top:928.12px;font-size:24.31px;font-family:'Liberation Sans';font-weight:400">robots.txt</div>
</div>
<div class="layer light">
<div class="b titlebar" style="left:106px;top:61px;width:2000px;height:60px;"></div>
<div class="b sep" style="left:106px;top:121px;width:2000px;height:2px;"></div>
<svg class="ic" style="left:129px;top:72px" width="27" height="36" viewBox="0 0 27 36">
<defs><linearGradient id="gcol" x1="0" x2="1"><stop offset="0" stop-color="#003a6e"/><stop offset="0.5" stop-color="#005a9e"/><stop offset="1" stop-color="#0a86d0"/></linearGradient>
<linearGradient id="gyel" x1="0" x2="1"><stop offset="0" stop-color="#c97d00"/><stop offset="0.5" stop-color="#db9a00"/><stop offset="1" stop-color="#e8b800"/></linearGradient></defs>
<rect x="4" y="1.8" width="18" height="1.2" fill="#f2c200"/>
<rect x="2.8" y="3" width="20.4" height="3" fill="#05386a"/>
<rect x="6" y="6" width="14.3" height="5" fill="#38d6f5"/>
<rect x="9.6" y="6" width="1" height="5" fill="#1a6a8a"/><rect x="15.2" y="6" width="1" height="5" fill="#1a6a8a"/>
<rect x="6" y="11" width="14" height="2" fill="#c49a00"/>
<rect x="3" y="13.1" width="20" height="1.8" fill="#05386a"/>
<polygon points="1,15 25,15 25,17.9 21,24 5,24 1,17.9" fill="url(#gyel)"/>
<rect x="1" y="15" width="24" height="2.9" fill="#f5cf00"/>
<rect x="6.3" y="24" width="13.7" height="9" fill="url(#gcol)"/>
<rect x="6.9" y="33" width="12.2" height="1.1" fill="#1ad0f5"/>
</svg>
<svg class="ic c-ico" style="left:812px;top:76px" width="34" height="28" viewBox="0 0 34 28" fill="none" stroke="currentColor" stroke-width="1.9" stroke-linecap="round" stroke-linejoin="round" ><path d="M1.25 5a3.15 3.15 0 0 1 3.15-3.15H8a2.5 2.5 0 0 1 1.8.8l1.5 1.5a2.5 2.5 0 0 0 1.8.8H27.5a3.15 3.15 0 0 1 3.15 3.15V22.7a3.15 3.15 0 0 1-3.15 3.15H4.4a3.15 3.15 0 0 1-3.15-3.15Z"/><path d="M1.25 9.9H30.65"/></svg>
<svg class="ic c-ico" style="left:1860px;top:80px" width="34" height="22" viewBox="0 0 34 22" fill="none" stroke="currentColor" stroke-width="2" stroke-linecap="round" stroke-linejoin="round" stroke-linecap="butt"><path d="M7 11h20"/></svg>
<svg class="ic c-ico" style="left:1955px;top:77px" width="28" height="28" viewBox="0 0 28 28" fill="none" stroke="currentColor" stroke-width="2" stroke-linecap="round" stroke-linejoin="round" stroke-linecap="butt" stroke-linejoin="miter"><rect x="4" y="4" width="20" height="20"/></svg>
<svg class="ic c-ico" style="left:2047px;top:77px" width="28" height="28" viewBox="0 0 28 28" fill="none" stroke="currentColor" stroke-width="2" stroke-linecap="round" stroke-linejoin="round" stroke-linecap="butt"><path d="M4 4L24 24M24 4L4 24"/></svg>
<div class="b toolbar" style="left:106px;top:123px;width:2000px;height:66px;"></div>
<div class="b sep" style="left:106px;top:189px;width:2000px;height:2px;"></div>
<div class="b sep" style="left:252px;top:123px;width:2px;height:66px;"></div>
<div class="b sep" style="left:398px;top:123px;width:2px;height:66px;"></div>
<div class="b sep" style="left:544px;top:123px;width:2px;height:66px;"></div>
<div class="b sep" style="left:758px;top:123px;width:2px;height:66px;"></div>
<div class="b sep" style="left:904px;top:123px;width:2px;height:66px;"></div>
<div class="b sep" style="left:1050px;top:123px;width:2px;height:66px;"></div>
<div class="b sep" style="left:1148px;top:123px;width:2px;height:66px;"></div>
<div class="b sep" style="left:1226px;top:123px;width:2px;height:66px;"></div>
<svg class="ic c-ico" style="left:122px;top:140px" width="40" height="32" viewBox="0 0 40 32" fill="none" stroke="currentColor" stroke-width="2" stroke-linecap="round" stroke-linejoin="round" ><path d="M10 25.7A5.1 5.1 0 0 1 10 15.5A8.3 8.3 0 0 1 26.5 14C31 13.2 34.9 16.5 34.6 20.5C34.3 23.7 32 25.7 29 25.7Z"/></svg>
<svg class="ic c-ico" style="left:196px;top:140px" width="36" height="32" viewBox="0 0 36 32" fill="none" stroke="currentColor" stroke-width="2" stroke-linecap="round" stroke-linejoin="round" ><rect x="3.1" y="16.2" width="29.7" height="9.5" rx="4.75"/><path d="M5.3 16.2L9.5 6.8Q10.3 5 12.3 5H24.6Q26.6 5 27.4 6.8L30.9 16.2"/><circle cx="27.7" cy="21.1" r="1.7" fill="currentColor" stroke="none"/></svg>
<svg class="ic c-ico" style="left:274px;top:140px" width="36" height="32" viewBox="0 0 36 32" fill="none" stroke="currentColor" stroke-width="2.1" stroke-linecap="round" stroke-linejoin="round" ><path d="M3.1 24.6V7.5a3.3 3.3 0 0 1 3.3-3.3h5.5a2.5 2.5 0 0 1 1.8.8l1.3 1.4a2.5 2.5 0 0 0 1.8.8H29.3a3.3 3.3 0 0 1 3.3 3.3V24.6a3.3 3.3 0 0 1-3.3 3.3H6.4a3.3 3.3 0 0 1-3.3-3.3z"/><path d="M10.9 17.8H22.7a2.15 2.15 0 0 0 0-4.3H21.6"/><path d="M13.7 14.3L10.6 17.8l3.1 3.6"/></svg>
<svg class="ic c-ico" style="left:341px;top:139px" width="38" height="36" viewBox="0 0 38 36" fill="none" stroke="currentColor" stroke-width="2" stroke-linecap="round" stroke-linejoin="round" ><path d="M14.9 2.1L15.78 4.62L18.3 5.5L15.78 6.38L14.9 8.9L14.02 6.38L11.5 5.5L14.02 4.62Z" fill="currentColor" stroke="currentColor" stroke-width="0.6"/><path d="M27.2 6.5L28.14 9.16L30.8 10.1L28.14 11.04L27.2 13.7L26.26 11.04L23.599999999999998 10.1L26.26 9.16Z" fill="currentColor" stroke="currentColor" stroke-width="0.6"/><path d="M7 10.4L8.07 13.43L11.1 14.5L8.07 15.57L7 18.6L5.93 15.57L2.9000000000000004 14.5L5.93 13.43Z" fill="currentColor" stroke="currentColor" stroke-width="0.6"/><path d="M14.1 20.200000000000003L15.50 24.20L19.5 25.6L15.50 27.00L14.1 31.0L12.70 27.00L8.7 25.6L12.70 24.20Z" fill="currentColor" stroke="currentColor" stroke-width="0.6"/><path d="M19.2 16L34 31.1" stroke-width="2.8"/></svg>
<svg class="ic c-ico" style="left:424px;top:138px" width="28" height="38" viewBox="0 0 28 38" fill="none" stroke="currentColor" stroke-width="2.6" stroke-linecap="round" stroke-linejoin="round" ><path d="M22 4.5L6.3 18.5 22 32.5"/></svg>
<svg class="ic c-dim" style="left:492px;top:138px" width="28" height="38" viewBox="0 0 28 38" fill="none" stroke="currentColor" stroke-width="2.6" stroke-linecap="round" stroke-linejoin="round" ><path d="M6.5 4.5L22.2 18.5 6.5 32.5"/></svg>
<svg class="ic c-ico" style="left:565px;top:141px" width="38" height="30" viewBox="0 0 38 30" fill="none" stroke="currentColor" stroke-width="1.9" stroke-linecap="round" stroke-linejoin="round" ><path d="M5 7.3L4.5 24.5L21 24L17.3 18.5C22 14 27 11 34.3 11.8C29 5.5 19 2 10.3 12Z"/></svg>
<svg class="ic c-ico" style="left:633px;top:141px" width="38" height="30" viewBox="0 0 38 30" fill="none" stroke="currentColor" stroke-width="1.9" stroke-linecap="round" stroke-linejoin="round" ><path d="M5 7.3L4.5 24.5L21 24L17.3 18.5C22 14 27 11 34.3 11.8C29 5.5 19 2 10.3 12Z" fill="currentColor"/></svg>
<svg class="ic c-ico" style="left:700px;top:141px" width="40" height="30" viewBox="0 0 40 30" fill="none" stroke="currentColor" stroke-width="1.2" stroke-linecap="round" stroke-linejoin="round" ><path d="M17.5 4.7L35.3 4.2L34.3 23.5L28.4 19.5C23 24.5 17 26 12 24C8 22.5 5.5 20 4.3 18C9 18.2 16 16.5 20.2 11.3L16.2 6Z" fill="currentColor"/></svg>
<svg class="ic c-ico" style="left:780px;top:137px" width="36" height="38" viewBox="0 0 36 38" fill="none" stroke="currentColor" stroke-width="2.35" stroke-linecap="round" stroke-linejoin="round" ><rect x="4.3" y="7.1" width="27.1" height="26.6" rx="3.5"/><path d="M9 6H27V10.7a2 2 0 0 1-2 2H11a2 2 0 0 1-2-2ZM12.8 6V5a2 2 0 0 1 2-2H21.2a2 2 0 0 1 2 2V6Z" fill="currentColor" stroke="none"/><path d="M18 16.9V28.4M13 23.2L18 28.4 23 23.2" stroke-width="1.9"/></svg>
<svg class="ic c-ico" style="left:848px;top:137px" width="36" height="38" viewBox="0 0 36 38" fill="none" stroke="currentColor" stroke-width="2.35" stroke-linecap="round" stroke-linejoin="round" ><rect x="4.3" y="7.1" width="27.1" height="26.6" rx="3.5"/><path d="M9 6H27V10.7a2 2 0 0 1-2 2H11a2 2 0 0 1-2-2ZM12.8 6V5a2 2 0 0 1 2-2H21.2a2 2 0 0 1 2 2V6Z" fill="currentColor" stroke="none"/><path d="M18 28.4V17.2M13 22.1L18 17.2 23 22.1" stroke-width="1.9"/></svg>
<svg class="ic c-ico" style="left:928px;top:137px" width="30" height="38" viewBox="0 0 30 38" fill="none" stroke="currentColor" stroke-width="3.4" stroke-linecap="round" stroke-linejoin="round" ><path d="M13 12.4V32.9"/><path d="M23.3 32.9V25Q23.3 20.8 19 20.3L16.5 20Q13.5 19.5 13 17"/><path d="M13 3.6L7.8 11.5H18.2Z" fill="currentColor" stroke-width="1.6"/></svg>
<svg class="ic c-ico" style="left:997px;top:137px" width="28" height="38" viewBox="0 0 28 38" fill="none" stroke="currentColor" stroke-width="3.4" stroke-linecap="round" stroke-linejoin="round" ><path d="M14.4 11V15M14.4 20.7V24.8M14.4 30.7V32.9"/><path d="M14.4 3.6L9.6 10.8H19.2Z" fill="currentColor" stroke-width="1.6"/></svg>
<svg class="ic c-ico" style="left:1072px;top:137px" width="36" height="38" viewBox="0 0 36 38" fill="none" stroke="currentColor" stroke-width="2.8" stroke-linecap="round" stroke-linejoin="round" ><path d="M9.3 4.3V19.1M9.3 27.5V33.9M25.8 4.3V10.2M25.8 18.6V33.9"/><circle cx="9.3" cy="23.3" r="4.2" stroke-width="2.2"/><circle cx="25.8" cy="14.4" r="4.2" stroke-width="2.2"/><path d="M13.2 21L21.9 16.7" stroke-width="2.2"/></svg>
<svg class="ic c-ico" style="left:1110px;top:148px" width="20" height="14" viewBox="0 0 20 14" fill="none" stroke="currentColor" stroke-width="1.5" stroke-linecap="round" stroke-linejoin="round" ><path d="M4.1 4.3L10 10.2 15.9 4.3"/></svg>
<svg class="ic c-ico" style="left:1168px;top:139px" width="40" height="34" viewBox="0 0 40 34" fill="none" stroke="currentColor" stroke-width="2" stroke-linecap="round" stroke-linejoin="round" ><rect x="5.1" y="6" width="29.8" height="22.9" rx="3.3"/><path d="M9.4 10.3L14.9 13.5 9.4 16.7" stroke-width="1.7"/><path d="M15.8 16.8H22" stroke-width="1.7" stroke-linecap="butt"/></svg>
<svg class="ic c-ico" style="left:1248px;top:137px" width="36" height="38" viewBox="0 0 36 38" fill="none" stroke="currentColor" stroke-width="2.1" stroke-linecap="round" stroke-linejoin="round" ><path d="M24.2 10.4H17.9A11.7 11.7 0 1 0 29.6 21.8"/><path d="M17 3.6L24.2 10.4 17 17.2"/></svg>
<svg class="ic c-ico" style="left:1519px;top:137px" width="38" height="38" viewBox="0 0 38 38" fill="none" stroke="currentColor" stroke-width="2.2" stroke-linecap="round" stroke-linejoin="round" ><circle cx="19" cy="19" r="15"/><path d="M19 11v16M12.5 20.5L19 27l6.5-6.5"/></svg>
<div class="b search" style="left:1576px;top:131px;width:504px;height:50px;"></div>
<svg class="ic c-ico" style="left:1582px;top:143px" width="28" height="28" viewBox="0 0 28 28" fill="none" stroke="currentColor" stroke-width="2" stroke-linecap="round" stroke-linejoin="round" ><circle cx="12" cy="11" r="6.5"/><path d="M17 16l5 5"/></svg>
<div class="b sidebar" style="left:106px;top:191px;width:346px;height:1030px;"></div>
<div class="b sidebar" style="left:452px;top:191px;width:12px;height:1030px;"></div>
<div class="b scroll" style="left:452px;top:191px;width:8px;height:991px;"></div>
<div class="b sep" style="left:464px;top:191px;width:2px;height:1069px;"></div>
<div class="b sep" style="left:106px;top:1220px;width:358px;height:2px;"></div>
<div class="b sidebar" style="left:106px;top:1222px;width:358px;height:38px;"></div>
<svg class="ic c-ico" style="left:116px;top:1227px" width="30" height="30" viewBox="0 0 30 30" fill="none" stroke="currentColor" stroke-width="1.8" stroke-linecap="round" stroke-linejoin="round" stroke-linecap="butt"><path d="M14 5.5V24.8M4.2 15.1H23.8"/></svg>
<svg class="ic c-ico" style="left:144px;top:1233px" width="20" height="14" viewBox="0 0 20 14" fill="none" stroke="currentColor" stroke-width="1.4" stroke-linecap="round" stroke-linejoin="round" ><path d="M4.2 5L10 10.8 15.8 5"/></svg>
<div class="b sel-side" style="left:106px;top:305px;width:346px;height:56px;"></div>
<div class="b badge-side" style="left:414px;top:259px;width:28px;height:36px;"></div>
<svg class="ic c-ico" style="left:146px;top:261px" width="36" height="32" viewBox="0 0 36 32" fill="none" stroke="currentColor" stroke-width="2.1" stroke-linecap="round" stroke-linejoin="round" ><path d="M3 6.5a3 3 0 0 1 3-3h5.5a3 3 0 0 1 2.2 1l1.4 1.6a3 3 0 0 0 2.2 1H30a3 3 0 0 1 3 3V25a3 3 0 0 1-3 3H6a3 3 0 0 1-3-3z"/><path d="M3 11.5h30"/></svg>
<svg class="ic c-ico" style="left:146px;top:317px" width="36" height="34" viewBox="0 0 36 34" fill="none" stroke="currentColor" stroke-width="2.1" stroke-linecap="round" stroke-linejoin="round" ><path d="M6 16.4A13.4 13.4 0 1 1 7.6 23.6"/><path d="M19 8.5V16.8L23.2 22.5"/><path d="M2 14.5H10.3L6.1 19.8Z" fill="currentColor" stroke-width="1"/></svg>
<svg class="ic c-ico" style="left:146px;top:370px" width="36" height="38" viewBox="0 0 36 38" fill="none" stroke="currentColor" stroke-width="2.3" stroke-linecap="round" stroke-linejoin="round" ><rect x="4.3" y="6.9" width="27.5" height="26.7" rx="3.5"/><path d="M9 7.7H27V10.9a2 2 0 0 1-2 2H11a2 2 0 0 1-2-2ZM13 7.7V5a2 2 0 0 1 2-2H21.4a2 2 0 0 1 2 2V7.7Z" fill="currentColor" stroke="none"/><path d="M10.7 16.9H25.8M10.7 22.4H25.8M10.7 27.6H25.8" stroke-width="2.2"/></svg>
<svg class="ic c-ico" style="left:146px;top:426px" width="36" height="38" viewBox="0 0 36 38" fill="none" stroke="currentColor" stroke-width="2" stroke-linecap="round" stroke-linejoin="round" ><circle cx="9" cy="8" r="4"/><circle cx="9" cy="30" r="4"/><circle cx="28" cy="30" r="4"/><path d="M9 12v14"/><path d="M28 25.6V11.2a2.7 2.7 0 0 0-2.7-2.7H22"/><path d="M17.5 8.3L25 3V13.6Z" fill="currentColor" stroke-width="1"/></svg>
<svg class="ic c-ico" style="left:146px;top:482px" width="36" height="38" viewBox="0 0 36 38" fill="none" stroke="currentColor" stroke-width="2" stroke-linecap="round" stroke-linejoin="round" ><path d="M7.5 29V8a4.5 4.5 0 0 1 4.5-4.5h15.5a3 3 0 0 1 3 3V25H11.5a4 4 0 0 0 0 8H31"/><path d="M12 4v21"/><path d="M15.5 11h12M15.5 15h9"/><path d="M29 25.5a5 5 0 0 0 0 7.5"/></svg>
<svg class="ic c-ico" style="left:146px;top:539px" width="36" height="36" viewBox="0 0 36 36" fill="none" stroke="currentColor" stroke-width="2" stroke-linecap="round" stroke-linejoin="round" ><path d="M13.87 8.24L15.51 3.51A14.7 14.7 0 0 1 20.49 3.51L22.13 8.24A10.6 10.6 0 0 1 21.98 8.18L26.49 6.00A14.7 14.7 0 0 1 30.00 9.51L27.82 14.02A10.6 10.6 0 0 1 27.76 13.87L32.49 15.51A14.7 14.7 0 0 1 32.49 20.49L27.76 22.13A10.6 10.6 0 0 1 27.82 21.98L30.00 26.49A14.7 14.7 0 0 1 26.49 30.00L21.98 27.82A10.6 10.6 0 0 1 22.13 27.76L20.49 32.49A14.7 14.7 0 0 1 15.51 32.49L13.87 27.76A10.6 10.6 0 0 1 14.02 27.82L9.51 30.00A14.7 14.7 0 0 1 6.00 26.49L8.18 21.98A10.6 10.6 0 0 1 8.24 22.13L3.51 20.49A14.7 14.7 0 0 1 3.51 15.51L8.24 13.87A10.6 10.6 0 0 1 8.18 14.02L6.00 9.51A14.7 14.7 0 0 1 9.51 6.00L14.02 8.18A10.6 10.6 0 0 1 13.87 8.24Z"/><circle cx="18" cy="18" r="5.2"/></svg>
<svg class="ic c-ico" style="left:153px;top:651px" width="26" height="38" viewBox="0 0 26 38" fill="none" stroke="currentColor" stroke-width="2.3" stroke-linecap="round" stroke-linejoin="round" ><circle cx="6" cy="7" r="4"/><circle cx="19" cy="10" r="4"/><circle cx="6" cy="29.5" r="4"/><path d="M6 11v14.5"/><path d="M7 22l10.5-5.5 1-2.5"/></svg>
<div class="b badge-side" style="left:368px;top:651px;width:74px;height:36px;"></div>
<svg class="ic c-ico" style="left:153px;top:707px" width="26" height="38" viewBox="0 0 26 38" fill="none" stroke="currentColor" stroke-width="2.3" stroke-linecap="round" stroke-linejoin="round" ><circle cx="6" cy="7" r="4"/><circle cx="19" cy="10" r="4"/><circle cx="6" cy="29.5" r="4"/><path d="M6 11v14.5"/><path d="M7 22l10.5-5.5 1-2.5"/></svg>
<svg class="ic c-ico" style="left:124px;top:882px" width="22" height="22" viewBox="0 0 22 22" fill="none" stroke="currentColor" stroke-width="1.7" stroke-linecap="round" stroke-linejoin="round" ><path d="M4 7l7 7 7-7"/></svg>
<svg class="ic c-fold" style="left:152px;top:878px" width="36" height="34" viewBox="0 0 36 34" fill="none" stroke="currentColor" stroke-width="1.9" stroke-linecap="round" stroke-linejoin="round" ><path d="M14.9 25.2H6a2.65 2.65 0 0 1-2.65-2.65V7A2.65 2.65 0 0 1 6 4.35H10.5a2.5 2.5 0 0 1 1.8.8l1.2 1.2a2.5 2.5 0 0 0 1.8.8H27.9a2.6 2.6 0 0 1 2.6 2.6V14.5"/><path d="M3.35 11H30.5"/><path d="M20.6 26.6A3.8 3.8 0 0 1 19.5 19.2A5.2 5.2 0 0 1 31.7 20.7A3 3 0 0 1 31 26.6Z" fill="currentColor" stroke-width="0.8"/></svg>
<svg class="ic c-ico" style="left:177px;top:931px" width="26" height="38" viewBox="0 0 26 38" fill="none" stroke="currentColor" stroke-width="2.3" stroke-linecap="round" stroke-linejoin="round" ><circle cx="6" cy="7" r="4"/><circle cx="19" cy="10" r="4"/><circle cx="6" cy="29.5" r="4"/><path d="M6 11v14.5"/><path d="M7 22l10.5-5.5 1-2.5"/></svg>
<svg class="ic c-ico" style="left:177px;top:987px" width="26" height="38" viewBox="0 0 26 38" fill="none" stroke="currentColor" stroke-width="2.3" stroke-linecap="round" stroke-linejoin="round" ><circle cx="6" cy="7" r="4"/><circle cx="19" cy="10" r="4"/><circle cx="6" cy="29.5" r="4"/><path d="M6 11v14.5"/><path d="M7 22l10.5-5.5 1-2.5"/></svg>
<svg class="ic c-ico" style="left:177px;top:1043px" width="26" height="38" viewBox="0 0 26 38" fill="none" stroke="currentColor" stroke-width="2.3" stroke-linecap="round" stroke-linejoin="round" ><circle cx="6" cy="7" r="4"/><circle cx="19" cy="10" r="4"/><circle cx="6" cy="29.5" r="4"/><path d="M6 11v14.5"/><path d="M7 22l10.5-5.5 1-2.5"/></svg>
<svg class="ic c-ico" style="left:177px;top:1099px" width="26" height="38" viewBox="0 0 26 38" fill="none" stroke="currentColor" stroke-width="2.3" stroke-linecap="round" stroke-linejoin="round" ><circle cx="6" cy="7" r="4"/><circle cx="19" cy="10" r="4"/><circle cx="6" cy="29.5" r="4"/><path d="M6 11v14.5"/><path d="M7 22l10.5-5.5 1-2.5"/></svg>
<svg class="ic c-ico" style="left:177px;top:1155px" width="26" height="38" viewBox="0 0 26 38" fill="none" stroke="currentColor" stroke-width="2.3" stroke-linecap="round" stroke-linejoin="round" ><circle cx="6" cy="7" r="4"/><circle cx="19" cy="10" r="4"/><circle cx="6" cy="29.5" r="4"/><path d="M6 11v14.5"/><path d="M7 22l10.5-5.5 1-2.5"/></svg>
<div class="b hhead" style="left:466px;top:191px;width:597px;height:78px;"></div>
<div class="b sep2" style="left:466px;top:269px;width:597px;height:2px;"></div>
<div class="b list" style="left:466px;top:271px;width:597px;height:989px;"></div>
<svg class="ic c-ico" style="left:486px;top:212px" width="36" height="36" viewBox="0 0 36 36" fill="none" stroke="currentColor" stroke-width="2.4" stroke-linecap="round" stroke-linejoin="round" ><path d="M6.2 17.2A13.2 13.2 0 1 1 9.3 25.7"/><path d="M18.8 9.4V17.6L22.9 22.9" stroke-width="2.2"/><path d="M2 15.6H10.2L6.1 20.5Z" fill="currentColor" stroke-width="1"/></svg>
<div class="b mbtn" style="left:960px;top:206px;width:76px;height:48px;"></div>
<svg class="ic c-ico" style="left:974px;top:219px" width="30" height="22" viewBox="0 0 30 22" fill="none" stroke="currentColor" stroke-width="1.6" stroke-linecap="round" stroke-linejoin="round" ><path d="M4.2 6.5H24M4.2 11H24M4.2 15.5H24"/></svg>
<svg class="ic c-ico" style="left:1000px;top:222px" width="22" height="14" viewBox="0 0 22 14" fill="none" stroke="currentColor" stroke-width="1.5" stroke-linecap="round" stroke-linejoin="round" ><path d="M6.3 4.5L12 10.2 17.7 4.5"/></svg>
<div class="b sel-hist" style="left:466px;top:271px;width:597px;height:91px;"></div>
<div class="b rowsep" style="left:466px;top:362px;width:597px;height:2px;"></div>
<svg class="ic" style="left:532px;top:283px" width="66" height="66"><use href="#avatar"/></svg>
<div class="b bdg-blue" style="left:801px;top:275px;width:77px;height:36px;"></div>
<div class="b rowsep" style="left:466px;top:454px;width:597px;height:2px;"></div>
<svg class="ic" style="left:552px;top:375px" width="66" height="66"><use href="#avatar"/></svg>
<div class="b bdg-grey" style="left:821px;top:367px;width:60px;height:36px;"></div>
<div class="b rowsep" style="left:466px;top:546px;width:597px;height:2px;"></div>
<svg class="ic" style="left:552px;top:467px" width="66" height="66"><use href="#avatar"/></svg>
<div class="b bdg-grey" style="left:821px;top:459px;width:60px;height:36px;"></div>
<div class="b rowsep" style="left:466px;top:638px;width:597px;height:2px;"></div>
<svg class="ic" style="left:532px;top:559px" width="66" height="66"><use href="#avatar"/></svg>
<div class="b bdg-grey" style="left:801px;top:551px;width:80px;height:36px;"></div>
<div class="b rowsep" style="left:466px;top:730px;width:597px;height:2px;"></div>
<svg class="ic" style="left:532px;top:651px" width="66" height="66"><use href="#avatar"/></svg>
<div class="b bdg-blue2" style="left:801px;top:643px;width:67px;height:36px;"></div>
<div class="b rowsep" style="left:466px;top:822px;width:597px;height:2px;"></div>
<svg class="ic" style="left:532px;top:743px" width="66" height="66"><use href="#avatar"/></svg>
<div class="b rowsep" style="left:466px;top:914px;width:597px;height:2px;"></div>
<svg class="ic" style="left:532px;top:835px" width="66" height="66"><use href="#avatar"/></svg>
<svg class="ic" style="left:466px;top:270px" width="100" height="650" viewBox="0 0 100 650">
<path d="M34 46V598" stroke="#2a91d6" stroke-width="3.6"/>
<path d="M54 148V184L38 219" stroke="#e8413a" stroke-width="3.6" fill="none"/>
<g class="gcirc" stroke-width="2.4">
<circle cx="34" cy="46" r="10"/><circle cx="54" cy="138" r="10"/><circle cx="34" cy="230" r="10"/><circle cx="34" cy="322" r="10"/><circle cx="34" cy="414" r="10"/><circle cx="34" cy="506" r="10"/><circle cx="34" cy="598" r="10"/>
</g></svg>
<div class="b sep2" style="left:1063px;top:191px;width:2px;height:1069px;"></div>
<div class="b hhead" style="left:1065px;top:191px;width:1041px;height:78px;"></div>
<div class="b sep2" style="left:1065px;top:269px;width:1041px;height:2px;"></div>
<div class="b seg" style="left:1827px;top:206px;width:253px;height:48px;"></div>
<div class="b seg-on" style="left:1984px;top:208px;width:94px;height:44px;"></div>
<div class="b fhead" style="left:1065px;top:271px;width:1041px;height:58px;"></div>
<div class="b rowsep2" style="left:1065px;top:329px;width:1041px;height:2px;"></div>
<div class="b list" style="left:1065px;top:331px;width:1041px;height:929px;"></div>
<div class="b rowsep2" style="left:1065px;top:393px;width:1041px;height:2px;"></div>
<svg class="ic c-fileic" style="left:1136px;top:345px" width="34" height="34" viewBox="0 0 34 34" fill="none" stroke="currentColor" stroke-width="0" stroke-linecap="round" stroke-linejoin="round" ><path d="M2 6a3 3 0 0 1 3-3h17l9 9v16a3 3 0 0 1-3 3H5a3 3 0 0 1-3-3z" fill="currentColor" stroke="none"/><path d="M20 4v9.6h9.6z" class="foldtri" stroke="none"/></svg>
<div class="b sel-file" style="left:1065px;top:395px;width:1041px;height:64px;"></div>
<div class="b rowsep2" style="left:1065px;top:457px;width:1041px;height:2px;"></div>
<svg class="ic c-codeic" style="left:1135px;top:412px" width="34" height="30" viewBox="0 0 34 30" fill="none" stroke="currentColor" stroke-width="4" stroke-linecap="round" stroke-linejoin="round" ><path d="M13.5 5L4 14l9.5 9M20.5 5L30 14l-9.5 9"/></svg>
<div class="b rowsep2" style="left:1065px;top:521px;width:1041px;height:2px;"></div>
<svg class="ic c-ico" style="left:1109px;top:480px" width="16" height="22" viewBox="0 0 16 22" fill="none" stroke="currentColor" stroke-width="1.6" stroke-linecap="round" stroke-linejoin="round" ><path d="M3.8 2.8L11.2 10 3.8 17.2"/></svg>
<svg class="ic c-fold" style="left:1133px;top:474px" width="38" height="34" viewBox="0 0 38 34" fill="none" stroke="currentColor" stroke-width="1.9" stroke-linecap="round" stroke-linejoin="round" ><path d="M4.35 7.2A3.15 3.15 0 0 1 7.5 4.05H11.5a2.5 2.5 0 0 1 1.8.8l1.1 1.1a2.5 2.5 0 0 0 1.8.75H30.5a3.15 3.15 0 0 1 3.15 3.15V24.6a3.15 3.15 0 0 1-3.15 3.15H7.5a3.15 3.15 0 0 1-3.15-3.15Z"/><path d="M4.35 11.8H33.65" stroke-linecap="butt"/></svg>
<div class="b rowsep2" style="left:1065px;top:585px;width:1041px;height:2px;"></div>
<svg class="ic c-codeic" style="left:1135px;top:540px" width="34" height="30" viewBox="0 0 34 30" fill="none" stroke="currentColor" stroke-width="4" stroke-linecap="round" stroke-linejoin="round" ><path d="M13.5 5L4 14l9.5 9M20.5 5L30 14l-9.5 9"/></svg>
<div class="b rowsep2" style="left:1065px;top:649px;width:1041px;height:2px;"></div>
<svg class="ic c-ico" style="left:1109px;top:608px" width="16" height="22" viewBox="0 0 16 22" fill="none" stroke="currentColor" stroke-width="1.6" stroke-linecap="round" stroke-linejoin="round" ><path d="M3.8 2.8L11.2 10 3.8 17.2"/></svg>
<svg class="ic c-fold" style="left:1133px;top:602px" width="38" height="34" viewBox="0 0 38 34" fill="none" stroke="currentColor" stroke-width="1.9" stroke-linecap="round" stroke-linejoin="round" ><path d="M4.35 7.2A3.15 3.15 0 0 1 7.5 4.05H11.5a2.5 2.5 0 0 1 1.8.8l1.1 1.1a2.5 2.5 0 0 0 1.8.75H30.5a3.15 3.15 0 0 1 3.15 3.15V24.6a3.15 3.15 0 0 1-3.15 3.15H7.5a3.15 3.15 0 0 1-3.15-3.15Z"/><path d="M4.35 11.8H33.65" stroke-linecap="butt"/></svg>
<div class="b rowsep2" style="left:1065px;top:713px;width:1041px;height:2px;"></div>
<svg class="ic c-codeic" style="left:1135px;top:668px" width="34" height="30" viewBox="0 0 34 30" fill="none" stroke="currentColor" stroke-width="4" stroke-linecap="round" stroke-linejoin="round" ><path d="M13.5 5L4 14l9.5 9M20.5 5L30 14l-9.5 9"/></svg>
<div class="b rowsep2" style="left:1065px;top:777px;width:1041px;height:2px;"></div>
<svg class="ic c-codeic" style="left:1135px;top:732px" width="34" height="30" viewBox="0 0 34 30" fill="none" stroke="currentColor" stroke-width="4" stroke-linecap="round" stroke-linejoin="round" ><path d="M13.5 5L4 14l9.5 9M20.5 5L30 14l-9.5 9"/></svg>
<div class="b rowsep2" style="left:1065px;top:841px;width:1041px;height:2px;"></div>
<svg class="ic c-ico" style="left:1109px;top:800px" width="16" height="22" viewBox="0 0 16 22" fill="none" stroke="currentColor" stroke-width="1.6" stroke-linecap="round" stroke-linejoin="round" ><path d="M3.8 2.8L11.2 10 3.8 17.2"/></svg>
<svg class="ic c-fold" style="left:1133px;top:794px" width="38" height="34" viewBox="0 0 38 34" fill="none" stroke="currentColor" stroke-width="1.9" stroke-linecap="round" stroke-linejoin="round" ><path d="M4.35 7.2A3.15 3.15 0 0 1 7.5 4.05H11.5a2.5 2.5 0 0 1 1.8.8l1.1 1.1a2.5 2.5 0 0 0 1.8.75H30.5a3.15 3.15 0 0 1 3.15 3.15V24.6a3.15 3.15 0 0 1-3.15 3.15H7.5a3.15 3.15 0 0 1-3.15-3.15Z"/><path d="M4.35 11.8H33.65" stroke-linecap="butt"/></svg>
<div class="b rowsep2" style="left:1065px;top:905px;width:1041px;height:2px;"></div>
<svg class="ic c-codeic" style="left:1135px;top:860px" width="34" height="30" viewBox="0 0 34 30" fill="none" stroke="currentColor" stroke-width="4" stroke-linecap="round" stroke-linejoin="round" ><path d="M13.5 5L4 14l9.5 9M20.5 5L30 14l-9.5 9"/></svg>
<div class="b rowsep2" style="left:1065px;top:969px;width:1041px;height:2px;"></div>
<svg class="ic c-codeic" style="left:1136px;top:921px" width="34" height="34" viewBox="0 0 34 34" fill="none" stroke="currentColor" stroke-width="3.4" stroke-linecap="round" stroke-linejoin="round" ><path d="M7.5 8.3H9.3M7.5 14.3H25.3M7.5 20.3H17M7.5 26.5H23.1"/></svg>
<div class="t c-main" style="left:182.00px;top:80.26px;font-size:22.96px;font-family:'Liberation Sans';font-weight:400">File</div>
<div class="t c-main" style="left:247.00px;top:79.62px;font-size:23.73px;font-family:'Liberation Sans';font-weight:400">View</div>
<div class="t c-main" style="left:326.00px;top:79.87px;font-size:23.43px;font-family:'Liberation Sans';font-weight:400">Repository</div>
<div class="t c-main" style="left:466.00px;top:79.29px;font-size:24.11px;font-family:'Liberation Sans';font-weight:400">Working Copy</div>
<div class="t c-main" style="left:645.00px;top:79.53px;font-size:23.82px;font-family:'Liberation Sans';font-weight:400">Help</div>
<div class="t c-main" style="left:860.00px;top:80.65px;font-size:23.45px;font-family:'Liberation Sans';font-weight:400">carparts-website_orig (master)</div>
<div class="t c-hdr" style="left:126.00px;top:210.76px;font-size:23.32px;font-family:'Liberation Sans';font-weight:700">Workspace</div>
<div class="t c-main" style="left:422.20px;top:267.40px;font-size:21.50px;font-family:'Liberation Sans';font-weight:400">3</div>
<div class="t c-main" style="left:194.50px;top:266.92px;font-size:23.96px;font-family:'Liberation Sans';font-weight:400">Working Copy</div>
<div class="t c-main" style="left:194.50px;top:323.07px;font-size:23.78px;font-family:'Liberation Sans';font-weight:400">History</div>
<div class="t c-main" style="left:194.50px;top:380.93px;font-size:21.59px;font-family:'Liberation Sans';font-weight:400">Stashes</div>
<div class="t c-main" style="left:194.50px;top:435.99px;font-size:22.69px;font-family:'Liberation Sans';font-weight:400">Pull Requests</div>
<div class="t c-main" style="left:194.50px;top:491.87px;font-size:22.83px;font-family:'Liberation Sans';font-weight:400">Reflog</div>
<div class="t c-main" style="left:194.50px;top:547.40px;font-size:23.39px;font-family:'Liberation Sans';font-weight:400">Settings</div>
<div class="t c-hdr" style="left:126.00px;top:603.84px;font-size:22.16px;font-family:'Liberation Sans';font-weight:700">Branches</div>
<div class="t c-main" style="left:196.00px;top:660.33px;font-size:23.23px;font-family:'Liberation Sans';font-weight:400">master</div>
<div class="t c-main" style="left:376.50px;top:659.63px;font-size:20.52px;font-family:'Liberation Sans';font-weight:400">HEAD</div>
<div class="t c-main" style="left:196.00px;top:714.70px;font-size:23.98px;font-family:'Liberation Sans';font-weight:400">develop</div>
<div class="t c-hdr" style="left:126.00px;top:772.15px;font-size:21.68px;font-family:'Liberation Sans';font-weight:700">Tags</div>
<div class="t c-hdr" style="left:126.00px;top:827.70px;font-size:22.80px;font-family:'Liberation Sans';font-weight:700">Remotes</div>
<div class="t c-main" style="left:196.00px;top:881.73px;font-size:24.53px;font-family:'Liberation Sans';font-weight:400">origin</div>
<div class="t c-main" style="left:216.00px;top:938.16px;font-size:24.27px;font-family:'Liberation Sans';font-weight:400">develop</div>
<div class="t c-main" style="left:216.00px;top:993.48px;font-size:25.07px;font-family:'Liberation Sans';font-weight:400">feature/login</div>
<div class="t c-main" style="left:216.00px;top:1049.85px;font-size:24.63px;font-family:'Liberation Sans';font-weight:400">feature/uploader</div>
<div class="t c-main" style="left:216.00px;top:1106.55px;font-size:23.81px;font-family:'Liberation Sans';font-weight:400">main</div>
<div class="t c-main" style="left:216.00px;top:1162.64px;font-size:23.69px;font-family:'Liberation Sans';font-weight:400">staging</div>
<div class="t c-main" style="left:550.30px;top:221.79px;font-size:22.70px;font-family:'Liberation Sans';font-weight:400">All Branches, Remotes, Tags</div>
<div class="t c-sub" style="left:616.50px;top:284.48px;font-size:23.65px;font-family:'Liberation Sans';font-weight:400">Tobias Günther</div>
<div class="t c-white" style="left:811.00px;top:284.16px;font-size:24.03px;font-family:'Liberation Sans';font-weight:400">dev...</div>
<div class="t c-sub" style="left:905.50px;top:284.14px;font-size:24.05px;font-family:'Liberation Sans';font-weight:400">8/12/2021</div>
<div class="t c-sub" style="left:616.50px;top:330.12px;font-size:21.37px;font-family:'Liberation Mono';font-weight:400">dbf75826</div>
<div class="t c-main" style="left:736.00px;top:325.90px;font-size:24.34px;font-family:'Liberation Sans';font-weight:400">Improve product listings</div>
<div class="t c-sub" style="left:636.50px;top:376.48px;font-size:23.65px;font-family:'Liberation Sans';font-weight:400">Tobias Günther</div>
<div class="t c-white" style="left:831.00px;top:376.19px;font-size:23.99px;font-family:'Liberation Sans';font-weight:400">or...</div>
<div class="t c-sub" style="left:905.50px;top:376.14px;font-size:24.05px;font-family:'Liberation Sans';font-weight:400">5/16/2018</div>
<div class="t c-sub" style="left:636.50px;top:422.12px;font-size:21.37px;font-family:'Liberation Mono';font-weight:400">7173808e</div>
<div class="t c-main" style="left:756.00px;top:418.28px;font-size:23.89px;font-family:'Liberation Sans';font-weight:400">Change page structure</div>
<div class="t c-sub" style="left:636.50px;top:468.48px;font-size:23.65px;font-family:'Liberation Sans';font-weight:400">Tobias Günther</div>
<div class="t c-white" style="left:831.00px;top:468.19px;font-size:23.99px;font-family:'Liberation Sans';font-weight:400">or...</div>
<div class="t c-sub" style="left:905.50px;top:468.14px;font-size:24.05px;font-family:'Liberation Sans';font-weight:400">6/26/2014</div>
<div class="t c-sub" style="left:636.50px;top:514.12px;font-size:21.37px;font-family:'Liberation Mono';font-weight:400">6bcf266b</div>
<div class="t c-main" style="left:756.00px;top:510.03px;font-size:24.19px;font-family:'Liberation Sans';font-weight:400">Optimize markup stru...</div>
<div class="t c-sub" style="left:616.50px;top:560.48px;font-size:23.65px;font-family:'Liberation Sans';font-weight:400">Tobias Günther</div>
<div class="t c-white" style="left:811.00px;top:560.19px;font-size:23.99px;font-family:'Liberation Sans';font-weight:400">orig...</div>
<div class="t c-sub" style="left:905.50px;top:560.14px;font-size:24.05px;font-family:'Liberation Sans';font-weight:400">7/26/2013</div>
<div class="t c-sub" style="left:616.50px;top:606.12px;font-size:21.37px;font-family:'Liberation Mono';font-weight:400">2b504bee</div>
<div class="t c-main" style="left:736.00px;top:602.50px;font-size:23.63px;font-family:'Liberation Sans';font-weight:400">Change headlines for a...</div>
<div class="t c-sub" style="left:616.50px;top:652.48px;font-size:23.65px;font-family:'Liberation Sans';font-weight:400">Tobias Günther</div>
<div class="t c-white" style="left:811.00px;top:654.60px;font-size:21.15px;font-family:'Liberation Sans';font-weight:400">HE...</div>
<div class="t c-sub" style="left:905.50px;top:652.14px;font-size:24.05px;font-family:'Liberation Sans';font-weight:400">7/26/2013</div>
<div class="t c-sub" style="left:616.50px;top:698.12px;font-size:21.37px;font-family:'Liberation Mono';font-weight:400">0023cddd</div>
<div class="t c-main" style="left:736.00px;top:693.92px;font-size:24.31px;font-family:'Liberation Sans';font-weight:400">Add simple robots.txt</div>
<div class="t c-sub" style="left:616.50px;top:744.48px;font-size:23.65px;font-family:'Liberation Sans';font-weight:400">Tobias Günther</div>
<div class="t c-sub" style="left:905.50px;top:744.14px;font-size:24.05px;font-family:'Liberation Sans';font-weight:400">7/26/2013</div>
<div class="t c-sub" style="left:616.50px;top:790.12px;font-size:21.37px;font-family:'Liberation Mono';font-weight:400">113adcc4</div>
<div class="t c-main" style="left:736.00px;top:786.49px;font-size:23.64px;font-family:'Liberation Sans';font-weight:400">Add jQuery javascript re...</div>
<div class="t c-sub" style="left:616.50px;top:836.48px;font-size:23.65px;font-family:'Liberation Sans';font-weight:400">Tobias Günther</div>
<div class="t c-sub" style="left:905.50px;top:836.14px;font-size:24.05px;font-family:'Liberation Sans';font-weight:400">7/26/2013</div>
<div class="t c-sub" style="left:616.50px;top:882.12px;font-size:21.37px;font-family:'Liberation Mono';font-weight:400">fcd61994</div>
<div class="t c-main" style="left:736.00px;top:877.54px;font-size:24.77px;font-family:'Liberation Sans';font-weight:400">Initial Commit</div>
<div class="t c-main" style="left:1105.20px;top:219.66px;font-size:24.70px;font-family:'Liberation Mono';font-weight:400">dbf75826</div>
<div class="t c-main" style="left:1849.50px;top:221.35px;font-size:23.57px;font-family:'Liberation Sans';font-weight:400">Changeset</div>
<div class="t c-white" style="left:2008.00px;top:221.39px;font-size:23.53px;font-family:'Liberation Sans';font-weight:400">Tree</div>
<div class="t c-main" style="left:1087.70px;top:286.44px;font-size:23.34px;font-family:'Liberation Sans';font-weight:400">Filename</div>
<div class="t c-main" style="left:1178.00px;top:352.43px;font-size:23.94px;font-family:'Liberation Sans';font-weight:400">.gitignore</div>
<div class="t c-white" style="left:1178.00px;top:416.22px;font-size:24.20px;font-family:'Liberation Sans';font-weight:400">about.html</div>
<div class="t c-main" style="left:1178.00px;top:482.08px;font-size:22.00px;font-family:'Liberation Sans';font-weight:400">css</div>
<div class="t c-main" style="left:1178.00px;top:543.85px;font-size:24.63px;font-family:'Liberation Sans';font-weight:400">error.html</div>
<div class="t c-main" style="left:1178.00px;top:608.74px;font-size:23.58px;font-family:'Liberation Sans';font-weight:400">img</div>
<div class="t c-main" style="left:1178.00px;top:671.40px;font-size:25.16px;font-family:'Liberation Sans';font-weight:400">imprint.html</div>
<div class="t c-main" style="left:1178.00px;top:736.27px;font-size:24.14px;font-family:'Liberation Sans';font-weight:400">index.html</div>
<div class="t c-main" style="left:1178.00px;top:799.02px;font-size:25.62px;font-family:'Liberation Sans';font-weight:400">js</div>
<div class="t c-main" style="left:1178.00px;top:863.78px;font-size:24.72px;font-family:'Liberation Sans';font-weight:400">product.html</div>
<div class="t c-main" style="left:1178.00px;top:928.12px;font-size:24.31px;font-family:'Liberation Sans';font-weight:400">robots.txt</div>
</div>
</div>
</body></html>
